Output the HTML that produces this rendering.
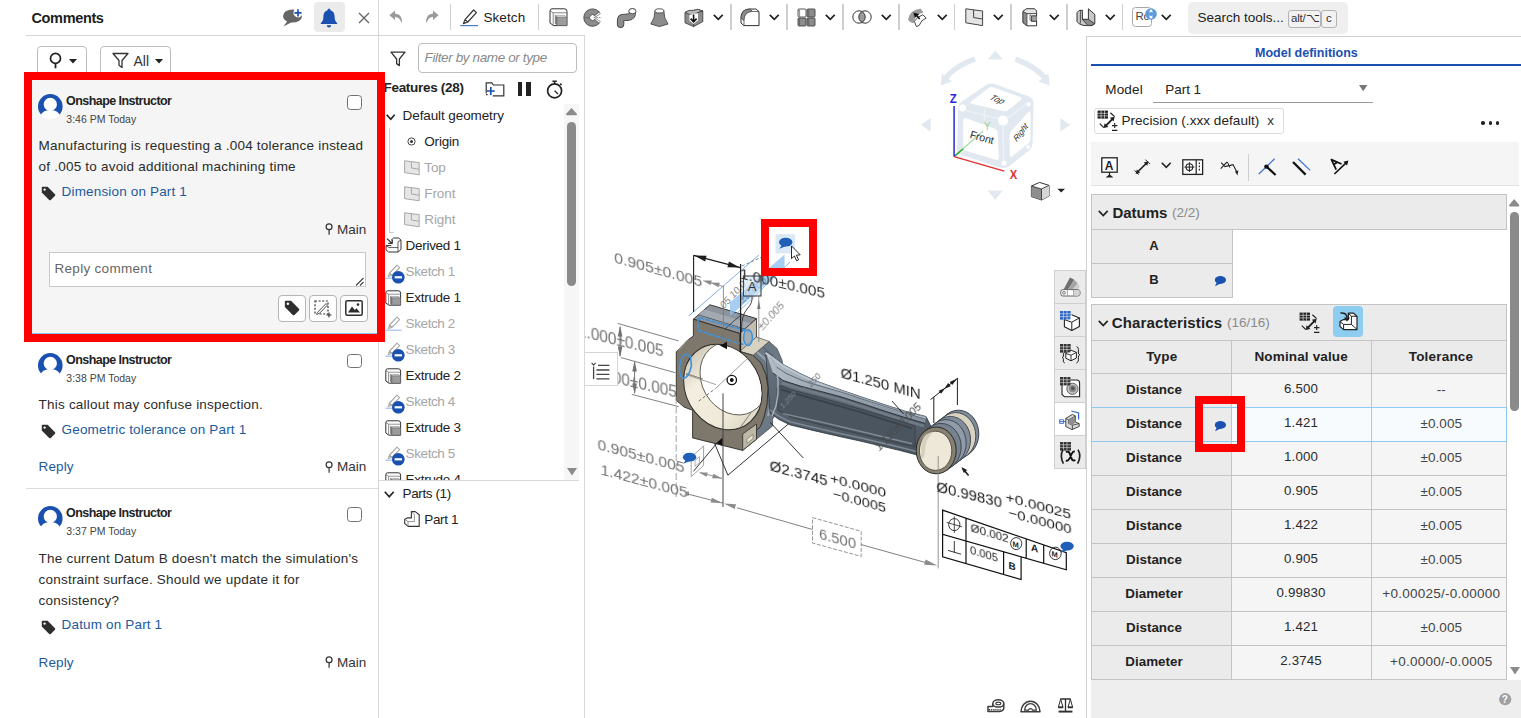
<!DOCTYPE html>
<html><head><meta charset="utf-8"><title>Comments</title>
<style>
*{box-sizing:border-box;margin:0;padding:0}
html,body{width:1521px;height:718px;overflow:hidden;background:#fff}
body{position:relative;font-family:"Liberation Sans",sans-serif;color:#222;font-size:14px}
.abs{position:absolute}
.t{position:absolute;white-space:nowrap;line-height:1}
svg{overflow:visible}
svg text{font-family:"Liberation Sans",sans-serif}
</style></head><body>
<!-- VIEWPORT -->
<div class="abs" style="left:1053.5px;top:269.5px;width:32.5px;height:34.0px;background:#ebebeb;border:1px solid #cfcfcf;"></div>
<div class="abs" style="left:1053.5px;top:302.5px;width:32.5px;height:34.5px;background:#ebebeb;border:1px solid #cfcfcf;"></div>
<div class="abs" style="left:1053.5px;top:336px;width:32.5px;height:33.5px;background:#ebebeb;border:1px solid #cfcfcf;"></div>
<div class="abs" style="left:1053.5px;top:368.5px;width:32.5px;height:34.0px;background:#ebebeb;border:1px solid #cfcfcf;"></div>
<div class="abs" style="left:1053.5px;top:401.5px;width:32.5px;height:34.0px;background:#fff;border:1px solid #cfcfcf;"></div>
<div class="abs" style="left:1053.5px;top:434.5px;width:32.5px;height:34.5px;background:#ebebeb;border:1px solid #cfcfcf;"></div>
<svg class="abs" style="left:1059.5px;top:277px;" width="21" height="20" viewBox="0 0 21 20"><path d="M3.6 12.6 L10 0.6 L14.2 2.8 L8 12.6Z" fill="#6e6e6e"/><path d="M8 12.6 L14.2 2.8 L17.8 6.2 L12.6 12.6Z" fill="#a4a4a4"/><path d="M12.6 12.6 L17.8 6.2 L19.8 9.4 L17.2 12.6Z" fill="#cdcdcd"/><rect x="0.8" y="12.6" width="19.2" height="6.4" rx="2.2" fill="#fff" stroke="#666" stroke-width="1"/><rect x="13.6" y="13.2" width="5.8" height="5.2" fill="#d4d4d4"/><path d="M7.4 12.8v6M13.6 12.8v6" stroke="#888" stroke-width="0.7"/><circle cx="4" cy="15.8" r="1.4" fill="none" stroke="#555" stroke-width="0.8"/></svg>
<svg class="abs" style="left:1059.5px;top:310.5px;" width="21" height="21" viewBox="0 0 21 21"><rect x="0" y="0" width="10.4" height="8.4" fill="#2f66c8"/><path d="M0 2.8h10.4M0 5.6h10.4M3.5 0v8.4M7 0v8.4" stroke="#e8e8e8" stroke-width="0.6"/><path d="M11.6 3.8 L19.4 7 L19.4 15.4 L11.8 19.4 L4.4 15.8 L4.4 8.6" fill="#fff" stroke="#222" stroke-width="1.1" stroke-linejoin="round"/><path d="M4.4 8.6 L11.8 11.2 L19.4 7 M11.8 11.2 V19.4" fill="none" stroke="#222" stroke-width="1"/><rect x="0" y="0" width="10.4" height="8.4" fill="#2f66c8"/><path d="M0 2.8h10.4M0 5.6h10.4M3.5 0v8.4M7 0v8.4" stroke="#e8e8e8" stroke-width="0.6"/></svg>
<svg class="abs" style="left:1059.5px;top:343.5px;" width="21" height="21" viewBox="0 0 21 21"><rect x="0" y="0" width="10.4" height="8.4" fill="#333"/><path d="M0 2.8h10.4M0 5.6h10.4M3.5 0v8.4M7 0v8.4" stroke="#e8e8e8" stroke-width="0.6"/><path d="M11 6.2 L16.4 8.4 L16.4 14 L11 16.8 L5.8 14.2 L5.8 8.6Z" fill="#fff" stroke="#222" stroke-width="1" stroke-linejoin="round"/><path d="M5.8 9.4 L11 11.2 L16.4 8.4 M11 11.2 V16.8" fill="none" stroke="#222" stroke-width="0.9"/><path d="M4.6 8.6 Q2.6 9 3.4 12 Q3.6 13.2 2.2 13.6 Q3.6 14 3.4 15.2 Q2.6 18.6 4.8 19" fill="none" stroke="#222" stroke-width="1"/><path d="M16.6 2.6 Q18.8 3 18.4 8 Q18.2 10.4 19.8 10.8 Q18.2 11.2 18.4 13.6 Q18.8 18.6 16.4 19" fill="none" stroke="#222" stroke-width="1"/><rect x="0" y="0" width="10.4" height="8.4" fill="#333"/><path d="M0 2.8h10.4M0 5.6h10.4M3.5 0v8.4M7 0v8.4" stroke="#e8e8e8" stroke-width="0.6"/></svg>
<svg class="abs" style="left:1059.5px;top:376.5px;" width="21" height="21" viewBox="0 0 21 21"><path d="M2 6 L2 17.4 L4.6 19.8 L19.6 19.8 L19.6 6 Q19.6 3 16.6 3 L8 3" fill="#fff" stroke="#222" stroke-width="1.1"/><circle cx="12.4" cy="11.8" r="5.6" fill="#c4c4c4" stroke="#444" stroke-width="0.8"/><circle cx="12.6" cy="11.6" r="3.6" fill="#8a8a8a"/><circle cx="12.8" cy="11.4" r="1.8" fill="#555"/><rect x="0" y="0" width="10.4" height="8.4" fill="#333"/><path d="M0 2.8h10.4M0 5.6h10.4M3.5 0v8.4M7 0v8.4" stroke="#e8e8e8" stroke-width="0.6"/></svg>
<svg class="abs" style="left:1059px;top:410px;" width="23" height="20" viewBox="0 0 23 20"><path d="M6.8 8.4 L13.4 4.4 L16.4 6 L16.4 12 L20.2 13.6 L20.2 16.4 L13 19.6 L6.8 16.6Z" fill="#d9d9d9" stroke="#333" stroke-width="0.9" stroke-linejoin="round"/><path d="M9.6 9.8 L16.4 6 M9.6 9.8 L9.6 13.4 L13.4 15.2 L20.2 13.6 M13.4 15.2 V19.4 M6.8 8.4 L9.6 9.8" fill="none" stroke="#333" stroke-width="0.8"/><path d="M9.6 9.8 L16.2 6.2 L16.4 12 L13.4 15.2 L9.6 13.4Z" fill="#8f8f8f"/><path d="M12.4 1 L19.6 3 L19.6 9.6" fill="none" stroke="#2f66c8" stroke-width="1.2"/><path d="M0.6 11.6 h6.4 M0.6 9.8 h4v3.6h-4z" fill="none" stroke="#2f66c8" stroke-width="0.9"/></svg>
<svg class="abs" style="left:1059.5px;top:441.5px;" width="22" height="23" viewBox="0 0 22 23"><rect x="0" y="0" width="11" height="8.6" fill="#333"/><path d="M0 2.8h11M0 5.6h11M3.5 0v8.6M7 0v8.6" stroke="#e8e8e8" stroke-width="0.6"/><path d="M3 7.6 Q-0.6 14 3.4 21.6" fill="none" stroke="#222" stroke-width="1.7"/><path d="M18 7.6 Q21.8 14 17.6 21.6" fill="none" stroke="#222" stroke-width="1.7"/><path d="M6 10.2 Q8.4 8.6 9.8 11.6 L11.6 16.6 Q12.6 19.6 15.4 18 M14.8 9.6 Q13 9 11.4 12.4 L9.6 16.4 Q8 19.4 5.8 18.6" fill="none" stroke="#111" stroke-width="1.9"/></svg>
<svg class="abs" style="left:986.5px;top:699px;" width="18" height="13.5" viewBox="0 0 18 13.5"><path d="M5.8 4.6 L5.8 7.6 L1 7.6 L1 12.4 L12.4 12.4 Q16.8 12 16.8 8.4 L16.8 4.6" fill="#fff" stroke="#3d3d3d" stroke-width="1.5" stroke-linejoin="round"/><path d="M2 10.8h12" stroke="#3d3d3d" stroke-width="1.6" stroke-dasharray="1.2 0.9"/><ellipse cx="11.3" cy="4.4" rx="5.5" ry="3.7" fill="#fff" stroke="#3d3d3d" stroke-width="1.5"/><ellipse cx="11.3" cy="4.4" rx="2.5" ry="1.3" fill="none" stroke="#3d3d3d" stroke-width="1.1"/></svg>
<svg class="abs" style="left:1020px;top:699px;" width="21" height="14" viewBox="0 0 21 14"><path d="M1 12.8 A9.5 10.6 0 0 1 20 12.8 Z" fill="#fff" stroke="#3d3d3d" stroke-width="1.5" stroke-linejoin="round"/><path d="M4.6 11.2 A5.9 6.6 0 0 1 16.4 11.2 L12.6 11.2 A2.2 2.2 0 0 0 8.4 11.2Z" fill="#fff" stroke="#3d3d3d" stroke-width="1.3" stroke-linejoin="round"/></svg>
<svg class="abs" style="left:1057.5px;top:698px;" width="15" height="15" viewBox="0 0 15 15"><path d="M2.2 1h10.6M7.5 1v12.4" stroke="#2e2e2e" stroke-width="1.3"/><path d="M0.6 13.6h13.8" stroke="#2e2e2e" stroke-width="1.9"/><path d="M2.6 1.2 L0.4 9.2 L5 9.2Z M12.4 1.2 L10 9.2 L14.6 9.2Z" fill="#fff" stroke="#2e2e2e" stroke-width="1" stroke-linejoin="round"/><path d="M0.2 9.4h5M9.8 9.4h5" stroke="#2e2e2e" stroke-width="1.6"/></svg>
<svg class="abs" style="left:0;top:0" width="1521" height="718" viewBox="0 0 1521 718"><path d="M995.2 50.5L987.7 59.5H1002.8Z M995.2 199.9L987.7 190.4H1002.8Z M920.6 124.8L930.6 118.2V131.5Z M1070.4 124.8L1060.4 118.2V131.5Z" fill="#e2e8f0"/><path d="M975 59 Q955 66 944.5 79" fill="none" stroke="#e2e8f0" stroke-width="5.5"/><path d="M940.6 85.5 L942 73.6 L952 81.4Z" fill="#e2e8f0"/><path d="M1015.4 59 Q1035.4 66 1045.9 79" fill="none" stroke="#e2e8f0" stroke-width="5.5"/><path d="M1049.8 85.5 L1048.4 73.6 L1038.4 81.4Z" fill="#e2e8f0"/><path d="M958.4 108 Q958.4 103.5 962 101.4 L986 85 Q990.6 82.4 995.5 84.2 L1029 96.5 Q1033.6 98.6 1033.6 103.5 L1032.6 143 Q1032.4 147.6 1029 150.6 L1009 166.2 Q1004.8 169.2 1000 167.4 L961.4 155 Q957 153.4 957 149Z" fill="#e2e8f0"/><path d="M971.5 101.2 L988.5 88 Q990.8 86.4 993.6 87.4 L1019.8 96.8 Q1023 98.2 1020.4 100.4 L1007.6 110.4 Q1005.6 111.8 1003 111 L972.4 104 Q969 103.2 971.5 101.2Z" fill="#fff"/><path d="M963.2 121 Q963.2 117 967 118.4 L994.4 128.6 Q997.6 130 997.7 133.4 L998.8 156.8 Q999 161 995 159.6 L966.6 151 Q963.2 150 963.2 146.4Z" fill="#fff"/><path d="M1009.6 135.6 Q1009.6 132.8 1011.4 130.8 L1027.4 113 Q1030.6 109.6 1030.6 114.4 L1030.4 139 Q1030.4 141.8 1028.2 143.6 L1012.6 156 Q1009.7 158.4 1009.7 154.6Z" fill="#fff"/><circle cx="962.6" cy="108" r="3.4" fill="#fff"/><circle cx="1003" cy="120.6" r="5" fill="#fff"/><circle cx="1028.6" cy="104.4" r="2.2" fill="#fff"/><circle cx="1004" cy="163" r="2.6" fill="#fff"/><circle cx="961.6" cy="150.6" r="2" fill="#fff"/><circle cx="1028" cy="147" r="2" fill="#fff"/><path d="M984.4 108.6 L984.4 120.2 M1003 125 L1003.6 160 M966 110.6 L998 118.6 M1007.6 118.6 L1026.4 103.6" stroke="#eef2f7" stroke-width="1.4" fill="none"/><path d="M954.1 156.6 L983 131.2" stroke="#9fdc9f" stroke-width="1.2"/><path d="M954.1 156.6 L963 148.8" stroke="#2fae3a" stroke-width="1.6"/><path d="M954.1 106 V156.6" stroke="#2626dc" stroke-width="1.5"/><path d="M954.1 156.6 L1004.3 171.1" stroke="#e23030" stroke-width="1.5"/><text x="953.2" y="102.8" font-size="13" font-weight="bold" fill="#2626dc" text-anchor="middle" textLength="7" lengthAdjust="spacingAndGlyphs">Z</text><text x="1013.6" y="179" font-size="13" font-weight="bold" fill="#e23030" text-anchor="middle" textLength="7.5" lengthAdjust="spacingAndGlyphs">X</text><text x="987.4" y="130.4" font-size="10" fill="#93d493" text-anchor="middle">Y</text><text transform="translate(995.3,101.6) rotate(21) skewX(-22)" font-size="8.6" fill="#333" text-anchor="middle" font-style="italic">Top</text><text transform="translate(980.8,141) rotate(16)" font-size="10.8" fill="#333" text-anchor="middle" letter-spacing="-0.2">Front</text><text transform="translate(1022.6,134.4) rotate(-53) skewX(-12)" font-size="8.4" fill="#333" text-anchor="middle" font-style="italic">Right</text><path d="M1031.4 186 L1039.6 182.4 L1049 185.4 L1049 196 L1041.6 200 L1031.4 196.6Z" fill="#fff" stroke="#333" stroke-width="1" stroke-linejoin="round"/><path d="M1031.4 186 L1041.4 189 L1041.6 200 L1031.4 196.6Z" fill="#8e8e8e"/><path d="M1041.4 189 L1049 185.4 L1049 196 L1041.6 200Z" fill="#d6d6d6"/><path d="M1031.4 186 L1041.4 189 L1049 185.4 M1041.4 189 L1041.6 200" fill="none" stroke="#333" stroke-width="0.9"/><path d="M1057.4 188.8h7.6l-3.8 3.8z" fill="#222"/></svg>
<svg class="abs" style="left:585px;top:36px;overflow:hidden" width="500" height="682" viewBox="585 36 500 682"><defs><linearGradient id="bore" x1="0" y1="0" x2="1" y2="1"><stop offset="0" stop-color="#b9b3a2"/><stop offset="0.35" stop-color="#f3eedf"/><stop offset="0.7" stop-color="#efe9d8"/><stop offset="1" stop-color="#cfc9b7"/></linearGradient><linearGradient id="rodg" x1="0" y1="0" x2="0" y2="1"><stop offset="0" stop-color="#6a7682"/><stop offset="1" stop-color="#49535d"/></linearGradient><filter id="bl"><feGaussianBlur stdDeviation="0.45"/></filter></defs><path d="M752.8 355.2 L769.1 341.4 L777.0 348.5 L782.0 360.0 L784.5 374.0 L783.5 390.0 L780.5 403.0 L777.0 412.0 L772.6 419.0 L772.6 426.0 L756.5 439.2 L756.5 430.4 L760.5 426.5 L764.0 417.0 L767.0 404.0 L768.0 388.0 L766.0 375.0 L761.0 363.0Z" fill="#6c7884" stroke="#3e464e" stroke-width="0.7" stroke-linejoin="round" /><path d="M757.0 352.0 L765.5 359.5 L770.5 371.0 L772.5 386.0 L771.5 402.0 L768.0 416.0" fill="none" stroke="#98a4b0" stroke-width="2.2" /><path d="M763.0 347.0 L772.0 355.0 L777.5 368.0 L779.5 384.0 L778.0 400.0 L774.0 413.0" fill="none" stroke="#525d68" stroke-width="1" /><path d="M765.6 351.5 L772.0 356.0 L783.4 364.6 L800.0 373.4 L816.9 381.3 L840.0 389.6 L861.4 396.9 L885.0 404.8 L906.0 411.4 L926.0 416.5 L938.0 440.0 L921.0 456.0 L900.0 450.5 L883.7 446.6 L860.0 441.0 L839.1 436.4 L815.0 430.9 L790.1 424.9 L779.0 419.5 L770.0 413.0Z" fill="url(#rodg)" stroke="#2f363d" stroke-width="0.8" stroke-linejoin="round" /><linearGradient id="flg" x1="0" y1="0" x2="1" y2="0"><stop offset="0" stop-color="#b3bdc7"/><stop offset="0.4" stop-color="#98a4b0"/><stop offset="1" stop-color="#8692a0"/></linearGradient><path d="M765.6 351.5 L772.0 356.0 L783.4 364.6 L800.0 373.4 L816.9 381.3 L840.0 389.6 L861.4 396.9 L885.0 404.8 L906.0 411.4 L926.0 416.5 L925.0 423.4 L906.0 417.9 L885.0 411.2 L861.4 403.4 L840.0 396.6 L816.9 390.4 L800.0 386.0 L783.0 380.5 L773.0 373.0Z" fill="url(#flg)"/><path d="M765.2 353.1 L771.6 357.6 L783.0 366.2 L799.6 375.0 L816.5 382.9 L839.6 391.2 L861.0 398.5 L884.6 406.4 L905.6 413.0 L925.6 418.1" fill="none" stroke="#c3ccd5" stroke-width="1.2" /><path d="M775.0 366.0 L786.0 373.4 L802.0 380.4 L818.0 385.4 L841.0 392.0 L862.0 399.0 L886.0 406.8 L907.0 413.5 L925.0 419.0" fill="none" stroke="#5e6a76" stroke-width="1" /><path d="M773.0 373.0 L783.0 380.5 L800.0 386.0 L816.9 390.4 L840.0 396.6 L861.4 403.4 L885.0 411.2 L906.0 417.9 L925.0 423.4" fill="none" stroke="#2c3238" stroke-width="1" /><path d="M782.0 383.1 L799.0 388.6 L815.9 393.0 L839.0 399.2 L860.4 406.0 L884.0 413.8 L905.0 420.5 L924.0 426.0" fill="none" stroke="#6f7b87" stroke-width="2.6" /><path d="M777.0 388.0 L781.0 385.6 L790.0 389.4 L820.0 397.4 L860.0 409.0 L900.0 421.0 L915.0 426.0 L915.0 447.0 L900.0 443.5 L860.0 434.0 L820.0 424.6 L792.0 417.5 L778.0 410.5Z" fill="#4b555f" stroke="#343b42" stroke-width="0.7" stroke-linejoin="round" /><path d="M781.0 389.6 L820.0 400.6 L860.0 412.0 L912.0 428.4" fill="none" stroke="#39414a" stroke-width="1.8" /><path d="M783.0 413.6 L820.0 421.8 L860.0 431.2 L912.0 443.8" fill="none" stroke="#7d8995" stroke-width="1.4" /><path d="M770.0 409.8 L779.0 416.3 L790.1 421.7 L815.0 427.7 L839.1 433.2 L860.0 437.8 L883.7 443.4 L900.0 447.3 L921.0 452.8" fill="none" stroke="#7c8894" stroke-width="1.6" /><path d="M771.0 357.0 L776.0 367.0 L778.0 380.0 L778.0 394.0 L776.0 406.0 L772.0 416.0" fill="none" stroke="#a7b2bd" stroke-width="1.4" /><path d="M693.4 319.2 L709.9 304.8 L756.5 318.6 L739.8 333.5Z" fill="#8d949b" stroke="#2b2b2b" stroke-width="0.9" stroke-linejoin="round" /><path d="M698.6 314.6 L745.0 328.8" fill="none" stroke="#30353a" stroke-width="0.9" /><path d="M698.6 314.6 L704.5 309.5 L751.0 323.4 L745.0 328.8Z" fill="#a2a9b0" /><path d="M725.0 328.9 L741.7 314.2" fill="none" stroke="#30353a" stroke-width="0.8" /><path d="M739.8 333.5 L756.5 318.6 L756.5 337.5 L739.8 352.6Z" fill="#c4beae" stroke="#2b2b2b" stroke-width="0.8" stroke-linejoin="round" /><path d="M739.8 351.2 L756.5 337.0 L769.1 341.4 L752.8 355.6Z" fill="#d8d2c0" stroke="#4a4a4a" stroke-width="0.7" stroke-linejoin="round" /><path d="M693.4 319.2 L739.8 333.5 L739.8 351.5 L752.8 355.2 L761.0 363.0 L766.0 375.0 L768.0 388.0 L767.0 404.0 L764.0 417.0 L760.5 426.5 L756.5 430.4 L756.5 439.2 L742.7 450.4 L692.6 437.9 L692.6 410.3 L684.0 407.0 L676.3 400.3 L676.3 351.8 L687.6 340.1 L693.4 336.0Z" fill="#7d776c" stroke="#2e2c28" stroke-width="0.9" stroke-linejoin="round" /><path d="M676.3 351.8 L687.6 340.1 L690.5 337.6 L680.0 349.0Z" fill="#b9b3a2" /><path d="M742.7 434.0 L756.5 424.0 L756.5 439.2 L742.7 450.4Z" fill="#bdb7a6" stroke="#2e2c28" stroke-width="0.8" stroke-linejoin="round" /><path d="M747.0 439.0 L753.0 434.4 L753.0 438.6 L747.0 443.4Z" fill="#e9e4d4" stroke="#555" stroke-width="0.5" stroke-linejoin="round" /><ellipse transform="matrix(1,0.17,0,1,722.8,387)" cx="0" cy="0" rx="39.2" ry="42.2" fill="url(#bore)" stroke="#2e2c28" stroke-width="1"/><clipPath id="bc"><ellipse transform="matrix(1,0.17,0,1,722.8,387)" cx="0" cy="0" rx="38.6" ry="41.6"/></clipPath><g clip-path="url(#bc)"><ellipse transform="matrix(1,0.17,0,1,733.5,378.5)" cx="0" cy="0" rx="33.5" ry="36" fill="#fff" stroke="#55514a" stroke-width="0.9"/><path d="M686.0 373.5 L703.0 379.0" fill="none" stroke="#6b675e" stroke-width="0.8" /><path d="M740.0 427.8 L751.0 412.6" fill="none" stroke="#6b675e" stroke-width="0.8" /></g><path d="M682 357.4 Q686.5 351.6 690.6 356.4 L691.4 366 Q688.6 378 683.4 378.4 Q679 376.4 679.4 367Z" fill="none" stroke="#3f93dd" stroke-width="1.6"/><path d="M699.4 317.6 L751 332 M699.4 317.6 Q696.6 322 698.8 330.8 L743.5 344.6" fill="none" stroke="#3f93dd" stroke-width="1.6" stroke-dasharray="5 1.2"/><ellipse cx="748" cy="337.4" rx="4.4" ry="8" fill="#8fa6bd" fill-opacity="0.6" stroke="#3f93dd" stroke-width="1.5"/><circle cx="731.8" cy="380" r="4.7" fill="#fff" stroke="#111" stroke-width="1.3"/><circle cx="731.8" cy="380" r="1.9" fill="#111"/><path d="M698.7 401.1 L715.4 388.6" fill="none" stroke="#555" stroke-width="0.8" stroke-dasharray="3 2"/><path d="M715.4 388.6 L748.0 358.0" fill="none" stroke="#777" stroke-width="0.7" /><path d="M686.0 374.5 L716.0 384.6" fill="none" stroke="#777" stroke-width="0.7" /><path d="M719.8 345.4L727 341.8V349.2Z" fill="#111"/><path d="M716.5 443L722.6 437.6V446Z" fill="#111"/><ellipse cx="958.4" cy="433.8" rx="20.4" ry="23.6" fill="#808c99" stroke="#2f363d" stroke-width="0.9"/><path d="M925.4 430.7 L947.6 414.1 L969.2 453.5 L947.0 470.1Z" fill="#808c99" stroke="#2f363d" stroke-width="0.9" stroke-linejoin="round" /><ellipse cx="955.6" cy="436" rx="20.2" ry="23.4" fill="#d9d3c2" stroke="#2f363d" stroke-width="0.8"/><ellipse cx="950.4" cy="439.8" rx="20.2" ry="23.4" fill="#808c99" stroke="#2f363d" stroke-width="0.8"/><ellipse cx="946" cy="443" rx="20.2" ry="23.4" fill="#8f9ba8" stroke="#2f363d" stroke-width="0.8"/><ellipse cx="941" cy="446.8" rx="20.2" ry="23.4" fill="#76828f" stroke="#2f363d" stroke-width="0.8"/><ellipse cx="936.2" cy="450.4" rx="20" ry="23.4" fill="#878171" stroke="#2a2825" stroke-width="1"/><ellipse cx="935.6" cy="450.8" rx="16.2" ry="19.6" fill="#eee8d8" stroke="#4a463e" stroke-width="0.9"/><path d="M921.6 441 Q924 432.6 934 431.6 Q925 438 924.6 455 Q922 462 921 455Z" fill="#cfc9b8" opacity="0.8"/><path d="M730 302.5 L784.5 254.5 L784.5 268 L730 316Z" fill="#8ec0ec" fill-opacity="0.78"/><path d="M688.6 316.1 L758.8 255.1" fill="none" stroke="#7fb2e5" stroke-width="1" /><path d="M734.0 316.0 L790.0 262.0" fill="none" stroke="#7fb2e5" stroke-width="0.9" /><text transform="translate(742,304) rotate(-42) skewX(-20)" font-size="11" fill="#6b8cad" font-style="italic">±0.005</text><text transform="translate(724,309) rotate(-47)" font-size="10" fill="#8a8a8a" font-style="italic">05 10.0</text><rect x="775.5" y="234.2" width="19.7" height="19.2" fill="#dbe8f5"/><path d="M693.6 255.2 L693.6 312.0" fill="none" stroke="#1e1e1e" stroke-width="1.1" /><path d="M693.6 255.4 L740.4 267.6" fill="none" stroke="#1e1e1e" stroke-width="1.1" /><path d="M694.2 255.6L706.6 255.7L705.1 261.5Z" fill="#1e1e1e"/><path d="M739.8 267.4L727.4 267.3L728.9 261.5Z" fill="#1e1e1e"/><path d="M740.6 264.0 L740.6 352.0" fill="none" stroke="#1e1e1e" stroke-width="1.2" /><path d="M742.0 266.0 L764.0 256.0" fill="none" stroke="#666" stroke-width="0.8" stroke-dasharray="3 2"/><rect x="743.4" y="276" width="17.6" height="20" fill="#cfe3f5" fill-opacity="0.6" stroke="#333" stroke-width="1"/><text x="752.2" y="291.4" font-size="13" fill="#333" text-anchor="middle">A</text><path d="M752 296 Q753 303 747 309 Q741 316 741.6 331" fill="none" stroke="#333" stroke-width="0.9"/><path d="M758.8 295.0 L758.8 342.0" fill="none" stroke="#777" stroke-width="0.7" /><path d="M758.8 300.0L760.5 309.0L757.1 309.0Z" fill="#777"/><text transform="matrix(1,0.28,0,1,614.2,262.4)" font-size="14" fill="#727272" textLength="88" lengthAdjust="spacingAndGlyphs" filter="url(#bl)">0.905±0.005</text><path d="M702.5 280.4L711.8 280.6L710.5 285.0Z" fill="#8c8c8c"/><path d="M710.5 282.6L719.8 282.8L718.5 287.2Z" fill="#8c8c8c"/><path d="M711.0 283.0 L724.0 286.6" fill="none" stroke="#8c8c8c" stroke-width="0.9" /><path d="M723.4 286.0 L723.4 344.0" fill="none" stroke="#777" stroke-width="0.8" /><text transform="matrix(1,0.235,0,1,740,278.4)" font-size="15" fill="#333" textLength="85" lengthAdjust="spacingAndGlyphs" filter="url(#bl)">1.000±0.005</text><text transform="translate(762.5,331) rotate(-48)" font-size="11" fill="#8a8a8a" font-style="italic" filter="url(#bl)">±0.005</text><text transform="matrix(1,0.245,0,1,578,335.8)" font-size="16" fill="#727272" textLength="85.5" lengthAdjust="spacingAndGlyphs" filter="url(#bl)">1.000±0.005</text><text transform="matrix(1,0.236,0,1,591.4,377.5)" font-size="16" fill="#727272" textLength="85.5" lengthAdjust="spacingAndGlyphs" filter="url(#bl)">1.000±0.005</text><path d="M617.6 323.4 L678.6 340.9" fill="none" stroke="#727272" stroke-width="0.9" /><path d="M621.0 357.6 L675.3 372.7" fill="none" stroke="#727272" stroke-width="0.9" /><path d="M631.8 394.4 L678.6 406.6" fill="none" stroke="#727272" stroke-width="0.9" /><path d="M620.1 327.0 L620.1 356.0" fill="none" stroke="#727272" stroke-width="1" /><path d="M620.1 325.6L622.4 336.6L617.8 336.6Z" fill="#727272"/><path d="M620.1 357.4L617.8 346.4L622.4 346.4Z" fill="#727272"/><path d="M634.6 362.0 L634.6 393.0" fill="none" stroke="#727272" stroke-width="1" /><path d="M634.6 360.6L636.9 371.6L632.3 371.6Z" fill="#727272"/><path d="M634.6 394.6L632.3 383.6L636.9 383.6Z" fill="#727272"/><path d="M676.2 397.0 L676.2 497.0" fill="none" stroke="#8a8a8a" stroke-width="0.8" stroke-dasharray="7 2.5"/><path d="M723.0 393.4 L723.0 507.0" fill="none" stroke="#444" stroke-width="1" /><text transform="matrix(1,0.27,0,1,597.6,449.3)" font-size="15.5" fill="#727272" textLength="87" lengthAdjust="spacingAndGlyphs" filter="url(#bl)">0.905±0.005</text><text transform="matrix(1,0.27,0,1,600.6,474.4)" font-size="15.5" fill="#727272" textLength="87" lengthAdjust="spacingAndGlyphs" filter="url(#bl)">1.422±0.005</text><path d="M699.0 472.4L707.8 472.4L706.6 476.8Z" fill="#8c8c8c"/><path d="M722.4 478.6L712.1 478.2L713.3 473.8Z" fill="#8c8c8c"/><path d="M700.0 472.6 L722.0 478.4" fill="none" stroke="#8c8c8c" stroke-width="0.9" /><path d="M686.9 493.8 L722.6 503.0" fill="none" stroke="#727272" stroke-width="0.9" /><path d="M722.8 503.2L710.6 502.5L711.9 497.7Z" fill="#8c8c8c"/><path d="M723.4 503.4L723.5 503.4L723.5 503.5Z" fill="#8c8c8c"/><path d="M723.8 503.6L736.0 504.3L734.7 509.1Z" fill="#8c8c8c"/><rect x="686" y="491.6" width="3" height="4" fill="#888"/><path d="M691.2 457 L703.6 446 L703.6 465.6 L691.2 476.6Z" fill="#fff" stroke="#8a8a8a" stroke-width="0.8"/><path d="M695 460.6 L699.4 456.6 L699.4 462.4 L695 466.4Z" fill="none" stroke="#8a8a8a" stroke-width="0.7"/><path d="M693.5 471.3 L717.3 442.6" fill="none" stroke="#1e1e1e" stroke-width="0.9" /><path d="M714.6 443.5 L727.9 475.2 L788.7 423.7" fill="none" stroke="#1e1e1e" stroke-width="0.9" /><path d="M770.2 422.3 L803.3 458.0" fill="none" stroke="#1e1e1e" stroke-width="0.9" /><path d="M737.0 507.8 L812.5 529.5" fill="none" stroke="#727272" stroke-width="0.9" /><path d="M812.5 517.6 L861.2 531.3 L861.2 556.4 L812.5 543Z" fill="#fff" stroke="#8a8a8a" stroke-width="0.9" stroke-dasharray="4 1.6"/><text transform="matrix(1,0.28,0,1,819,538.6)" font-size="14.5" fill="#727272" textLength="37" lengthAdjust="spacingAndGlyphs" filter="url(#bl)">6.500</text><path d="M861.2 544.6 L925.0 562.4" fill="none" stroke="#727272" stroke-width="0.9" /><path d="M937.4 565.6L924.1 564.8L925.6 559.6Z" fill="#8c8c8c"/><path d="M938.2 456.0 L938.2 568.4" fill="none" stroke="#8a8a8a" stroke-width="0.9" /><text transform="matrix(1,0.27,0,1,840.6,377.6)" font-size="14.5" fill="#1e1e1e" textLength="80" lengthAdjust="spacingAndGlyphs" filter="url(#bl)">Ø1.250 MIN</text><path d="M892.0 401.0 L903.5 414.0" fill="none" stroke="#1e1e1e" stroke-width="0.9" /><path d="M933.8 397.0 L933.8 423.0" fill="none" stroke="#1e1e1e" stroke-width="1" /><path d="M957.4 378.0 L957.4 405.0" fill="none" stroke="#1e1e1e" stroke-width="1" /><path d="M930.5 399.6 L957.4 378.4" fill="none" stroke="#1e1e1e" stroke-width="1" /><path d="M957.2 378.6L952.2 385.1L949.7 382.0Z" fill="#1e1e1e"/><path d="M945.4 387.9L941.1 393.8L938.7 390.7Z" fill="#1e1e1e"/><path d="M944.0 389.0L948.3 383.1L950.7 386.2Z" fill="#1e1e1e"/><text transform="translate(879.5,451.5) rotate(-46)" font-size="11" fill="#4a4a4a" font-style="italic" filter="url(#bl)">1.130±0.005</text><text transform="translate(783,409) rotate(-47)" font-size="8" fill="#7d8894" font-style="italic" filter="url(#bl)">1.250</text><text transform="translate(806,393) rotate(-47)" font-size="9" fill="#6b7682" font-style="italic" filter="url(#bl)">1.250</text><path d="M968.6 475.6 L963.0 469.0" fill="none" stroke="#1e1e1e" stroke-width="1.6" /><path d="M961.4 467.0L967.1 470.0L963.8 472.9Z" fill="#1e1e1e"/><text transform="matrix(1,0.27,0,1,769.6,470.4)" font-size="14.5" fill="#1e1e1e" textLength="58" lengthAdjust="spacingAndGlyphs" filter="url(#bl)">Ø2.3745</text><text transform="matrix(1,0.27,0,1,830,482.4)" font-size="13.5" fill="#1e1e1e" textLength="56" lengthAdjust="spacingAndGlyphs" filter="url(#bl)">+0.0000</text><text transform="matrix(1,0.27,0,1,833,498.2)" font-size="13.5" fill="#1e1e1e" textLength="53" lengthAdjust="spacingAndGlyphs" filter="url(#bl)">−0.0005</text><text transform="matrix(1,0.245,0,1,936.4,491.6)" font-size="14.5" fill="#1e1e1e" textLength="65.5" lengthAdjust="spacingAndGlyphs" filter="url(#bl)">Ø0.99830</text><text transform="matrix(1,0.27,0,1,1005.6,501.4)" font-size="13.5" fill="#1e1e1e" textLength="65.5" lengthAdjust="spacingAndGlyphs" filter="url(#bl)">+0.00025</text><text transform="matrix(1,0.27,0,1,1008.6,517)" font-size="13.5" fill="#1e1e1e" textLength="63" lengthAdjust="spacingAndGlyphs" filter="url(#bl)">−0.00000</text><path d="M942.6 510.1 L1066.3 552.8 L1066.3 569.8 L942.6 534.4Z M942.6 534.4 L942.6 556.9 L1021.1 579.5 L1021.1 556.9 M966 517.9 V563.6 M1026.2 539 V558.2 M1043.7 545 V563.2 M1003.6 551.9 V574.5" stroke="#111" stroke-width="1.2" fill="none" fill="#fff"/><ellipse cx="954.3" cy="524.6" rx="5.6" ry="6" fill="none" stroke="#222" stroke-width="0.9"/><path d="M946.6 522.4 L962.0 526.8" fill="none" stroke="#1e1e1e" stroke-width="0.8" /><path d="M954.3 516.4 L954.3 533.0" fill="none" stroke="#1e1e1e" stroke-width="0.8" /><path d="M954.3 541.0 L954.3 552.4" fill="none" stroke="#1e1e1e" stroke-width="0.9" /><path d="M948.0 550.4 L961.0 554.2" fill="none" stroke="#1e1e1e" stroke-width="0.9" /><text transform="matrix(1,0.3,0,1,970.6,531.4)" font-size="11" fill="#1e1e1e" textLength="38" lengthAdjust="spacingAndGlyphs" filter="url(#bl)">Ø0.002</text><ellipse cx="1016.2" cy="543.6" rx="5.6" ry="6" fill="none" stroke="#222" stroke-width="0.9"/><text transform="matrix(1,0.3,0,1,1012.6,546.2)" font-size="7.5" fill="#1e1e1e" font-weight="bold">M</text><text transform="matrix(1,0.3,0,1,1031,550.6)" font-size="10" fill="#1e1e1e" font-weight="bold">A</text><ellipse cx="1055.4" cy="553.4" rx="5.8" ry="6.2" fill="none" stroke="#222" stroke-width="0.9"/><text transform="matrix(1,0.3,0,1,1051.6,556)" font-size="7.5" fill="#1e1e1e" font-weight="bold">M</text><text transform="matrix(1,0.3,0,1,970,553.6)" font-size="11" fill="#1e1e1e" textLength="28" lengthAdjust="spacingAndGlyphs" filter="url(#bl)">0.005</text><text transform="matrix(1,0.3,0,1,1008.6,568.6)" font-size="10" fill="#1e1e1e" font-weight="bold">B</text><ellipse cx="785.7" cy="242.2" rx="6.7" ry="4.4" fill="#1f5fb8"/><path d="M782.2 244.7 L779.3000000000001 248.79999999999998 L786.3000000000001 246.0Z" fill="#1f5fb8"/><ellipse cx="689.6" cy="457.2" rx="6.7" ry="4.4" fill="#1f5fb8"/><path d="M686.1 459.7 L683.2 463.8 L690.2 461.0Z" fill="#1f5fb8"/><ellipse cx="1067.1" cy="546.1" rx="6.7" ry="4.4" fill="#1f5fb8"/><path d="M1063.6 548.6 L1060.6999999999998 552.7 L1067.6999999999998 549.9Z" fill="#1f5fb8"/><path d="M791.5 245.9 L791.5 258.6 L794.4 256 L796.6 260.8 L798.6 259.8 L796.4 255.2 L800.2 254.8Z" fill="#fff" stroke="#111" stroke-width="0.9" stroke-linejoin="round"/></svg>
<div class="abs" style="left:584px;top:352px;width:33.5px;height:33.5px;background:#fff;border:1px solid #d4d4d4;"></div>
<svg class="abs" style="left:591px;top:362px;" width="19" height="18" viewBox="0 0 19 18"><path d="M0.6 0.8 L2.6 3.2 L4.6 0.8" fill="none" stroke="#444" stroke-width="1.1"/><path d="M2.6 4.6v12.4" stroke="#444" stroke-width="1.3"/><path d="M7 3.4h11.4M5.4 8h13M5.4 12.4h13M5.4 16.8h13" stroke="#444" stroke-width="1.3"/></svg>

<!-- TOOLBAR -->
<svg class="abs" style="left:389px;top:9.5px;" width="14" height="14.5" viewBox="0 0 14 14.5"><path d="M6 0.4 L0.4 5.2 L6 10 L6 7 Q11 6.6 12.4 13.6 Q14.6 4.2 6 3.4Z" fill="#9a9a9a"/></svg>
<svg class="abs" style="left:424.5px;top:9.5px;" width="14" height="14.5" viewBox="0 0 14 14.5"><path d="M8 0.4 L13.6 5.2 L8 10 L8 7 Q3 6.6 1.6 13.6 Q-0.6 4.2 8 3.4Z" fill="#9a9a9a"/></svg>
<div class="abs" style="left:449.5px;top:4px;width:1.5px;height:26px;background:#cfcfcf;"></div>
<svg class="abs" style="left:460px;top:8.5px;" width="19" height="18" viewBox="0 0 19 18"><path d="M3.4 14.6 L5 10.6 L13.6 1 L16.4 3.6 L7.8 13 Z M5 10.6 L7.8 13" fill="#fff" stroke="#333" stroke-width="1.2" stroke-linejoin="round"/><path d="M0.4 16.6h17.6" stroke="#4a7bd0" stroke-width="1.2"/></svg>
<div class="t" style="top:10.6px;font-size:13.5px;left:483.4px;color:#222;letter-spacing:0.1px;">Sketch</div>
<div class="abs" style="left:537.5px;top:4px;width:1.5px;height:26px;background:#cfcfcf;"></div>
<svg class="abs" style="left:548.5px;top:8px;" width="19" height="18.5" viewBox="0 0 19 18.5"><path d="M3 0.8 H15.4 Q18 0.8 18 3.4 V17.6 H4.6 L1 15 V3 Q1 0.8 3 0.8Z" fill="#fff" stroke="#333" stroke-width="1"/><path d="M1.1 2.8 L4.2 4.8 V17.4 M4.2 4.8 H17.8" fill="none" stroke="#666" stroke-width="0.8"/><path d="M6.2 7.4 H15.8 L17.8 9.4 H8.2Z" fill="#cdcdcd" stroke="#666" stroke-width="0.4"/><path d="M6.2 7.4 L8.2 9.4 V17.4 L6.2 15.6Z" fill="#7a7a7a" stroke="#666" stroke-width="0.4"/><rect x="8.2" y="9.4" width="9.6" height="8" fill="#9c9c9c" stroke="#666" stroke-width="0.4"/></svg>
<svg class="abs" style="left:582.5px;top:8px;" width="19" height="19" viewBox="0 0 19 19"><path d="M16.16 4 A8.7 8.7 0 1 0 16.16 15.2 L11.8 11.53 A3 3 0 1 1 11.8 7.67Z" fill="#8c8c8c" stroke="#444" stroke-width="0.9" stroke-linejoin="round"/><path d="M16.2 4 L17.3 5.7 L12.7 8.9 L11.8 7.67Z M16.2 15.2 L17.3 13.5 L12.7 10.3 L11.8 11.53Z" fill="#fff" stroke="#444" stroke-width="0.6" stroke-linejoin="round"/><path d="M1.2 9.6 H6.4" stroke="#555" stroke-width="0.6"/><path d="M10.6 9.6 H18.6" stroke="#666" stroke-width="0.8" stroke-dasharray="1.6 1"/></svg>
<svg class="abs" style="left:616px;top:7.5px;" width="21" height="20" viewBox="0 0 21 20"><path d="M4.6 16.2 V13 C4.6 8.2 8 9.6 11 9.3 C15.4 9 16.4 8 16.4 4" fill="none" stroke="#444" stroke-width="7.4" stroke-linecap="round"/><path d="M4.6 16.2 V13 C4.6 8.2 8 9.6 11 9.3 C15.4 9 16.4 8 16.4 4" fill="none" stroke="#8c8c8c" stroke-width="5.6" stroke-linecap="round"/><ellipse cx="16.4" cy="3.2" rx="3.6" ry="2.6" fill="#fff" stroke="#444" stroke-width="0.9"/></svg>
<svg class="abs" style="left:650px;top:7.5px;" width="19" height="19" viewBox="0 0 19 19"><path d="M5 2.8 Q5.2 10 0.8 16 L9.4 18.6 L18 16 Q13.6 10 13.8 2.8Z" fill="#8c8c8c" stroke="#444" stroke-width="0.9" stroke-linejoin="round"/><ellipse cx="9.4" cy="2.9" rx="4.5" ry="2.1" fill="#fff" stroke="#444" stroke-width="0.9"/></svg>
<svg class="abs" style="left:684px;top:7.5px;" width="20" height="19" viewBox="0 0 20 19"><path d="M1 4.4 Q5 1.6 9.4 2.4 Q13.4 0 18.8 3 L18.8 13.6 L9.6 18.6 L1 14.8Z" fill="#8c8c8c" stroke="#444" stroke-width="0.9"/><path d="M1 4.4 Q5 6.4 9.6 7.4 Q14 3.4 18.8 3 M9.6 7.4V18.6" fill="none" stroke="#444" stroke-width="0.9"/><path d="M1 4.4 Q5 1.6 9.4 2.4 Q13.4 0 18.8 3 Q14 3.4 9.6 7.4 Q5 6.4 1 4.4Z" fill="#b8b8b8" stroke="#444" stroke-width="0.8"/><path d="M5.4 6.8 L14 5.2 L14 12.2 L9.6 16 L5.4 12.4Z" fill="#fff"/><path d="M9.6 6.4v7M6.6 10.6l3 3.2 3-3.2" fill="none" stroke="#111" stroke-width="1.6"/></svg>
<svg class="abs" style="left:713px;top:13.6px;" width="10.5" height="6.5" viewBox="0 0 10.5 6.5"><path d="M0.8 0.8L5.25 5.4L9.7 0.8" fill="none" stroke="#222" stroke-width="1.7"/></svg>
<div class="abs" style="left:730.0px;top:4px;width:1.5px;height:26px;background:#cfcfcf;"></div>
<svg class="abs" style="left:740px;top:8px;" width="20" height="18.5" viewBox="0 0 20 18.5"><path d="M1 10 Q1 1 10 1 L16 1 L19 3.6 L19 17.6 L4 17.6 L1 15Z" fill="#fff" stroke="#333" stroke-width="1"/><path d="M1 10 Q1 1 10 1 L12.6 3.4 Q4 3.6 4 12.6 Z" fill="#8c8c8c" stroke="#444" stroke-width="0.8"/><path d="M4 12.6 L4 17.6 M12.6 3.4 L19 3.6" stroke="#444" stroke-width="0.8" fill="none"/></svg>
<svg class="abs" style="left:769px;top:13.6px;" width="10.5" height="6.5" viewBox="0 0 10.5 6.5"><path d="M0.8 0.8L5.25 5.4L9.7 0.8" fill="none" stroke="#222" stroke-width="1.7"/></svg>
<div class="abs" style="left:786.0px;top:4px;width:1.5px;height:26px;background:#cfcfcf;"></div>
<svg class="abs" style="left:797px;top:8px;" width="19" height="18.5" viewBox="0 0 19 18.5"><rect x="1" y="1" width="8" height="8" rx="1" fill="#fff" stroke="#444" stroke-width="0.9"/><rect x="10" y="1" width="8" height="8" rx="1" fill="#8c8c8c" stroke="#444" stroke-width="0.9"/><rect x="1" y="10" width="8" height="8" rx="1" fill="#8c8c8c" stroke="#444" stroke-width="0.9"/><rect x="10" y="10" width="8" height="8" rx="1" fill="#8c8c8c" stroke="#444" stroke-width="0.9"/><path d="M1 2.4h1.6v6M10 2.4h1.6v6M1 11.4h1.6v6M10 11.4h1.6v6" fill="none" stroke="#555" stroke-width="0.7"/></svg>
<svg class="abs" style="left:825px;top:13.6px;" width="10.5" height="6.5" viewBox="0 0 10.5 6.5"><path d="M0.8 0.8L5.25 5.4L9.7 0.8" fill="none" stroke="#222" stroke-width="1.7"/></svg>
<div class="abs" style="left:842.0px;top:4px;width:1.5px;height:26px;background:#cfcfcf;"></div>
<svg class="abs" style="left:852px;top:10px;" width="20" height="14" viewBox="0 0 20 14"><defs><clipPath id="bl1"><circle cx="7" cy="7" r="6.2"/></clipPath></defs><circle cx="7" cy="7" r="6.2" fill="#fff"/><circle cx="13" cy="7" r="6.2" fill="#fff"/><circle cx="13" cy="7" r="6.2" fill="#9a9a9a" clip-path="url(#bl1)"/><circle cx="7" cy="7" r="6.2" fill="none" stroke="#333" stroke-width="1"/><circle cx="13" cy="7" r="6.2" fill="none" stroke="#333" stroke-width="1"/></svg>
<svg class="abs" style="left:881px;top:13.6px;" width="10.5" height="6.5" viewBox="0 0 10.5 6.5"><path d="M0.8 0.8L5.25 5.4L9.7 0.8" fill="none" stroke="#222" stroke-width="1.7"/></svg>
<div class="abs" style="left:898.0px;top:4px;width:1.5px;height:26px;background:#cfcfcf;"></div>
<svg class="abs" style="left:907px;top:7.5px;" width="21" height="20" viewBox="0 0 21 20"><path d="M1 11.6 Q3 1.6 13.6 0.8 L16.4 4.6 Q8 6 6.8 15 Q3 15 1 11.6Z" fill="#9a9a9a"/><path d="M7.4 13.4 Q9.6 8.8 15.8 6.8 L19.2 10 Q14 12 12.2 17.4 L9.4 18.6Z" fill="#fff" stroke="#333" stroke-width="0.9"/><path d="M6.4 4.4 L12.4 6.2 L10.6 7.4 L13.4 10.6 L12 11.6 L9.4 8.4 L7.8 9.8Z" fill="#111"/></svg>
<svg class="abs" style="left:936.5px;top:13.6px;" width="10.5" height="6.5" viewBox="0 0 10.5 6.5"><path d="M0.8 0.8L5.25 5.4L9.7 0.8" fill="none" stroke="#222" stroke-width="1.7"/></svg>
<div class="abs" style="left:953.5px;top:4px;width:1.5px;height:26px;background:#cfcfcf;"></div>
<svg class="abs" style="left:965px;top:8px;" width="19" height="18.5" viewBox="0 0 19 18.5"><path d="M0.8 0.8 L17.6 3 L17.6 17.6 L0.8 14.8Z" fill="#e4e4e4" stroke="#444" stroke-width="1"/><path d="M8.6 1.8 L8.6 9.6 L17.4 11" fill="none" stroke="#444" stroke-width="1"/></svg>
<svg class="abs" style="left:992.5px;top:13.6px;" width="10.5" height="6.5" viewBox="0 0 10.5 6.5"><path d="M0.8 0.8L5.25 5.4L9.7 0.8" fill="none" stroke="#222" stroke-width="1.7"/></svg>
<div class="abs" style="left:1010.0px;top:4px;width:1.5px;height:26px;background:#cfcfcf;"></div>
<svg class="abs" style="left:1022px;top:8px;" width="16" height="18.5" viewBox="0 0 16 18.5"><path d="M1 3.4 L4.4 0.8 L12.6 0.8 L14.6 3 L14.6 8 L9.6 8 L9.6 13.2 L14.6 13.2 L14.6 17.8 L5 17.8 L1 14.6Z" fill="#fff" stroke="#333" stroke-width="1" stroke-linejoin="round"/><path d="M1 3.4 L5 5.6 L5 17.8 L1 14.6Z" fill="#8c8c8c" stroke="#333" stroke-width="0.7"/><path d="M5 5.6 L14.4 5.6 M9.6 8 L8 6.8 M9.6 13.2 L8 12 L8 6.8" fill="none" stroke="#333" stroke-width="0.7"/><path d="M9.6 8 H14.6 V13.2 H9.6Z" fill="#a0a0a0" stroke="#333" stroke-width="0.6"/><path d="M1 3.4 L4.4 0.8 L12.6 0.8 L14.6 3 L14.4 5.6 L5 5.6Z" fill="#e4e4e4" stroke="#333" stroke-width="0.7"/></svg>
<svg class="abs" style="left:1049px;top:13.6px;" width="10.5" height="6.5" viewBox="0 0 10.5 6.5"><path d="M0.8 0.8L5.25 5.4L9.7 0.8" fill="none" stroke="#222" stroke-width="1.7"/></svg>
<div class="abs" style="left:1066.0px;top:4px;width:1.5px;height:26px;background:#cfcfcf;"></div>
<svg class="abs" style="left:1075.5px;top:8px;" width="20" height="18.5" viewBox="0 0 20 18.5"><path d="M1 4.6 Q2.4 1.6 6.4 2.2 L6.4 11.4 L12.4 11.4 L12.4 0.8 L18.8 6.4 L18.8 15.6 Q17 18.6 11.4 17.6 Q3.6 17.8 1 13.6Z" fill="#c9c9c9" stroke="#333" stroke-width="1" stroke-linejoin="round"/><path d="M6.4 11.4 L12 17.4 M12.4 11.4 L18.6 15.8 M4.4 2.4 V15.6" fill="none" stroke="#333" stroke-width="0.8"/><path d="M6.4 11.4 L12.4 11.4 L18.6 15.8 Q16 18 12 17.4Z" fill="#8c8c8c" stroke="#333" stroke-width="0.7"/></svg>
<svg class="abs" style="left:1105px;top:13.6px;" width="10.5" height="6.5" viewBox="0 0 10.5 6.5"><path d="M0.8 0.8L5.25 5.4L9.7 0.8" fill="none" stroke="#222" stroke-width="1.7"/></svg>
<div class="abs" style="left:1121.8px;top:4px;width:1.5px;height:26px;background:#cfcfcf;"></div>
<div class="abs" style="left:1131.5px;top:7px;width:20.5px;height:20px;border:1px solid #a8a8a8;border-radius:3.5px;background:#fff;"></div>
<div class="t" style="top:10.7px;font-size:11.5px;left:1135.4px;color:#444;letter-spacing:-0.3px;">Rc</div>
<svg class="abs" style="left:1145px;top:8px;" width="12" height="12" viewBox="0 0 12 12"><circle cx="6" cy="6" r="5.8" fill="#5c9bdc"/><rect x="4.6" y="1.4" width="2.8" height="9.2" rx="1.3" fill="#fff"/><circle cx="6" cy="6" r="2" fill="#5c9bdc"/></svg>
<svg class="abs" style="left:1161px;top:13.6px;" width="10.5" height="6.5" viewBox="0 0 10.5 6.5"><path d="M0.8 0.8L5.25 5.4L9.7 0.8" fill="none" stroke="#222" stroke-width="1.7"/></svg>
<div class="abs" style="left:1188px;top:1.5px;width:159.5px;height:32px;background:#efefef;border-radius:5px;"></div>
<div class="t" style="top:10.6px;font-size:13.5px;left:1197.5px;color:#222;letter-spacing:0px;">Search tools...</div>
<div class="abs" style="left:1287.5px;top:10px;width:33px;height:17.6px;background:#f2f2f2;border:1px solid #b3b3b3;border-bottom-width:1.5px;border-radius:3px;"></div>
<div class="t" style="top:13.3px;font-size:11.5px;left:1291.0px;color:#333;letter-spacing:-0.2px;">alt/⌥</div>
<div class="abs" style="left:1320.6px;top:10px;width:16.6px;height:17.6px;background:#f2f2f2;border:1px solid #b3b3b3;border-bottom-width:1.5px;border-radius:3px;"></div>
<div class="t" style="top:13.3px;font-size:11.5px;left:1326.0px;color:#333;">c</div>

<!-- FEATURE PANEL -->
<div class="abs" style="left:584px;top:36px;width:1px;height:682px;background:#d9d9d9;"></div>
<svg class="abs" style="left:389.5px;top:51px;" width="16" height="16" viewBox="0 0 16 16"><path d="M1 1.2h14l-5.6 6.8v6.6l-2.8-2v-4.6z" fill="none" stroke="#333" stroke-width="1.3" stroke-linejoin="round"/></svg>
<div class="abs" style="left:418px;top:43px;width:159px;height:30px;border:1px solid #bdbdbd;border-radius:4px;background:#fff;"></div>
<div class="t" style="top:51.2px;font-size:13.5px;left:424.6px;color:#8a8a8a;letter-spacing:-0.38px;font-style:italic;">Filter by name or type</div>
<div class="t" style="top:81.0px;font-size:13.5px;left:383.5px;color:#222;font-weight:bold;letter-spacing:-0.3px;">Features (28)</div>
<svg class="abs" style="left:485px;top:81px;" width="20" height="16" viewBox="0 0 20 16"><path d="M1.2 12.5v-10.7h5.6l1.6 2.2h10.4v10.8h-11" fill="none" stroke="#333" stroke-width="1.2"/><path d="M1 13.6h1.6" stroke="#333" stroke-width="1.2"/><path d="M5.8 6v8M1.8 10h8" stroke="#1a50b0" stroke-width="1.7"/></svg>
<div class="abs" style="left:518px;top:82px;width:4.4px;height:14px;background:#222;"></div>
<div class="abs" style="left:526.2px;top:82px;width:4.4px;height:14px;background:#222;"></div>
<svg class="abs" style="left:546px;top:79.5px;" width="18" height="19" viewBox="0 0 18 19"><circle cx="8.6" cy="10.8" r="7" fill="none" stroke="#222" stroke-width="1.7"/><path d="M6.4 1.2h4.4M8.6 1.2v2.6M14.2 3.6l1.4 1.4" stroke="#222" stroke-width="1.5"/><path d="M8.6 10.8l3.4 3.2" stroke="#222" stroke-width="1.2"/></svg>
<svg class="abs" style="left:385.5px;top:114px;" width="9.5" height="6" viewBox="0 0 9.5 6"><path d="M0.8 0.8L4.75 5.2L8.7 0.8" fill="none" stroke="#222" stroke-width="1.7"/></svg>
<div class="t" style="top:109.0px;font-size:13.5px;left:402.6px;color:#222;letter-spacing:-0.1px;">Default geometry</div>
<div class="abs" style="left:388.5px;top:128px;width:1px;height:104px;background:#d0d0d0;"></div>
<div class="abs" style="left:388.5px;top:231.5px;width:5px;height:1px;background:#d0d0d0;"></div>
<div class="abs" style="left:564px;top:104px;width:15px;height:376px;background:#f6f6f6;"></div>
<svg class="abs" style="left:566px;top:108.4px;" width="11" height="7.2" viewBox="0 0 11 7.2"><path d="M5.5 0L11 6Q11 7.2 10 7.2H1Q0 7.2 0 6Z" fill="#8a8a8a"/></svg>
<div class="abs" style="left:567px;top:121.5px;width:9px;height:164px;background:#8a8a8a;border-radius:4.5px;"></div>
<svg class="abs" style="left:566.5px;top:468.4px;" width="10" height="7.4" viewBox="0 0 10 7.4"><path d="M0 0h10l-5 7.4z" fill="#8a8a8a"/></svg>
<svg class="abs" style="left:407px;top:137px;" width="9" height="9" viewBox="0 0 9 9"><circle cx="4.5" cy="4.5" r="3.6" fill="#fff" stroke="#444" stroke-width="1"/><circle cx="4.5" cy="4.5" r="1.5" fill="#333"/></svg>
<div class="t" style="top:134.6px;font-size:13.5px;left:424.3px;color:#222;letter-spacing:-0.2px;">Origin</div>
<svg class="abs" style="left:404px;top:159.6px;" width="16" height="15.5" viewBox="0 0 16 15.5"><path d="M0.6 0.8 L15.2 2.6 L15.2 14.8 L0.6 12.6Z" fill="#e6e6e6" stroke="#a8a8a8" stroke-width="1"/><path d="M7.4 1.8 L7.4 8 L15 9.2" fill="none" stroke="#a8a8a8" stroke-width="1"/></svg>
<div class="t" style="top:161.0px;font-size:13.5px;left:424.3px;color:#a6a6a6;letter-spacing:-0.1px;">Top</div>
<svg class="abs" style="left:404px;top:185.6px;" width="16" height="15.5" viewBox="0 0 16 15.5"><path d="M0.6 0.8 L15.2 2.6 L15.2 14.8 L0.6 12.6Z" fill="#e6e6e6" stroke="#a8a8a8" stroke-width="1"/><path d="M7.4 1.8 L7.4 8 L15 9.2" fill="none" stroke="#a8a8a8" stroke-width="1"/></svg>
<div class="t" style="top:187.0px;font-size:13.5px;left:424.3px;color:#a6a6a6;letter-spacing:-0.1px;">Front</div>
<svg class="abs" style="left:404px;top:211.6px;" width="16" height="15.5" viewBox="0 0 16 15.5"><path d="M0.6 0.8 L15.2 2.6 L15.2 14.8 L0.6 12.6Z" fill="#e6e6e6" stroke="#a8a8a8" stroke-width="1"/><path d="M7.4 1.8 L7.4 8 L15 9.2" fill="none" stroke="#a8a8a8" stroke-width="1"/></svg>
<div class="t" style="top:213.0px;font-size:13.5px;left:424.3px;color:#a6a6a6;letter-spacing:-0.1px;">Right</div>
<div class="abs" style="left:379px;top:232px;width:185px;height:247.5px;overflow:hidden"><svg class="abs" style="left:6px;top:5.4px;" width="17" height="16" viewBox="0 0 17 16"><path d="M6 3.4 L8.6 1 L13.8 1 L16 3.2 L16 12.4 L13.2 15 L3.6 15 L1 12.8 L1 8.6 L6.4 8.6" fill="#fff" stroke="#333" stroke-width="1"/><path d="M1 8.6 L4 10.6 L13 10.6 L13 4.6 L16 3.2 M13 10.6 L13 15" fill="none" stroke="#333" stroke-width="0.8"/><path d="M2 1.6 L7 6.2 M7.4 2.6 L7.2 6.4 L3.2 6.4" fill="none" stroke="#333" stroke-width="1.2"/></svg>
<div class="t" style="top:6.6px;font-size:13.5px;left:26.6px;color:#222;letter-spacing:-0.3px;">Derived 1</div>
<svg class="abs" style="left:6px;top:32px;" width="18" height="16" viewBox="0 0 18 16"><path d="M3.2 12.6 L4.6 9 L12 1.2 L14.6 3.6 L7 11.4 Z M4.6 9 L7 11.4" fill="#fff" stroke="#a8a8a8" stroke-width="1.1" stroke-linejoin="round"/><path d="M0.5 14.2h16" stroke="#8fb4ea" stroke-width="1"/></svg>
<svg class="abs" style="left:13.4px;top:38.6px;" width="12.6" height="12.6" viewBox="0 0 12.6 12.6"><circle cx="6.3" cy="6.3" r="6.3" fill="#1a50b0"/><rect x="2.6" y="5.2" width="7.4" height="2.2" fill="#fff"/></svg>
<div class="t" style="top:32.6px;font-size:13.5px;left:26.6px;color:#a6a6a6;letter-spacing:-0.4px;">Sketch 1</div>
<svg class="abs" style="left:6px;top:57.6px;" width="17" height="16" viewBox="0 0 17 16"><path d="M2.6 0.8 H13.4 Q15.6 0.8 15.6 3 V15.2 H4 L0.8 13 V2.8 Q0.8 0.8 2.6 0.8Z" fill="#fff" stroke="#333" stroke-width="1"/><path d="M0.9 2.6 L3.6 4.2 V15 M3.6 4.2 H15.4" fill="none" stroke="#666" stroke-width="0.7"/><path d="M5.4 6.4 H13.8 L15.4 8 H7Z" fill="#cdcdcd" stroke="#666" stroke-width="0.4"/><path d="M5.4 6.4 L7 8 V15 L5.4 13.6Z" fill="#7a7a7a" stroke="#666" stroke-width="0.4"/><rect x="7" y="8" width="8.4" height="7" fill="#9c9c9c" stroke="#666" stroke-width="0.4"/></svg>
<div class="t" style="top:58.6px;font-size:13.5px;left:26.6px;color:#222;letter-spacing:-0.3px;">Extrude 1</div>
<svg class="abs" style="left:6px;top:84px;" width="18" height="16" viewBox="0 0 18 16"><path d="M3.2 12.6 L4.6 9 L12 1.2 L14.6 3.6 L7 11.4 Z M4.6 9 L7 11.4" fill="#fff" stroke="#a8a8a8" stroke-width="1.1" stroke-linejoin="round"/><path d="M0.5 14.2h16" stroke="#8fb4ea" stroke-width="1"/></svg>
<div class="t" style="top:84.6px;font-size:13.5px;left:26.6px;color:#a6a6a6;letter-spacing:-0.4px;">Sketch 2</div>
<svg class="abs" style="left:6px;top:110px;" width="18" height="16" viewBox="0 0 18 16"><path d="M3.2 12.6 L4.6 9 L12 1.2 L14.6 3.6 L7 11.4 Z M4.6 9 L7 11.4" fill="#fff" stroke="#a8a8a8" stroke-width="1.1" stroke-linejoin="round"/><path d="M0.5 14.2h16" stroke="#8fb4ea" stroke-width="1"/></svg>
<svg class="abs" style="left:13.4px;top:116.6px;" width="12.6" height="12.6" viewBox="0 0 12.6 12.6"><circle cx="6.3" cy="6.3" r="6.3" fill="#1a50b0"/><rect x="2.6" y="5.2" width="7.4" height="2.2" fill="#fff"/></svg>
<div class="t" style="top:110.6px;font-size:13.5px;left:26.6px;color:#a6a6a6;letter-spacing:-0.4px;">Sketch 3</div>
<svg class="abs" style="left:6px;top:135.6px;" width="17" height="16" viewBox="0 0 17 16"><path d="M2.6 0.8 H13.4 Q15.6 0.8 15.6 3 V15.2 H4 L0.8 13 V2.8 Q0.8 0.8 2.6 0.8Z" fill="#fff" stroke="#333" stroke-width="1"/><path d="M0.9 2.6 L3.6 4.2 V15 M3.6 4.2 H15.4" fill="none" stroke="#666" stroke-width="0.7"/><path d="M5.4 6.4 H13.8 L15.4 8 H7Z" fill="#cdcdcd" stroke="#666" stroke-width="0.4"/><path d="M5.4 6.4 L7 8 V15 L5.4 13.6Z" fill="#7a7a7a" stroke="#666" stroke-width="0.4"/><rect x="7" y="8" width="8.4" height="7" fill="#9c9c9c" stroke="#666" stroke-width="0.4"/></svg>
<div class="t" style="top:136.6px;font-size:13.5px;left:26.6px;color:#222;letter-spacing:-0.3px;">Extrude 2</div>
<svg class="abs" style="left:6px;top:162px;" width="18" height="16" viewBox="0 0 18 16"><path d="M3.2 12.6 L4.6 9 L12 1.2 L14.6 3.6 L7 11.4 Z M4.6 9 L7 11.4" fill="#fff" stroke="#a8a8a8" stroke-width="1.1" stroke-linejoin="round"/><path d="M0.5 14.2h16" stroke="#8fb4ea" stroke-width="1"/></svg>
<svg class="abs" style="left:13.4px;top:168.6px;" width="12.6" height="12.6" viewBox="0 0 12.6 12.6"><circle cx="6.3" cy="6.3" r="6.3" fill="#1a50b0"/><rect x="2.6" y="5.2" width="7.4" height="2.2" fill="#fff"/></svg>
<div class="t" style="top:162.6px;font-size:13.5px;left:26.6px;color:#a6a6a6;letter-spacing:-0.4px;">Sketch 4</div>
<svg class="abs" style="left:6px;top:187.6px;" width="17" height="16" viewBox="0 0 17 16"><path d="M2.6 0.8 H13.4 Q15.6 0.8 15.6 3 V15.2 H4 L0.8 13 V2.8 Q0.8 0.8 2.6 0.8Z" fill="#fff" stroke="#333" stroke-width="1"/><path d="M0.9 2.6 L3.6 4.2 V15 M3.6 4.2 H15.4" fill="none" stroke="#666" stroke-width="0.7"/><path d="M5.4 6.4 H13.8 L15.4 8 H7Z" fill="#cdcdcd" stroke="#666" stroke-width="0.4"/><path d="M5.4 6.4 L7 8 V15 L5.4 13.6Z" fill="#7a7a7a" stroke="#666" stroke-width="0.4"/><rect x="7" y="8" width="8.4" height="7" fill="#9c9c9c" stroke="#666" stroke-width="0.4"/></svg>
<div class="t" style="top:188.6px;font-size:13.5px;left:26.6px;color:#222;letter-spacing:-0.3px;">Extrude 3</div>
<svg class="abs" style="left:6px;top:214px;" width="18" height="16" viewBox="0 0 18 16"><path d="M3.2 12.6 L4.6 9 L12 1.2 L14.6 3.6 L7 11.4 Z M4.6 9 L7 11.4" fill="#fff" stroke="#a8a8a8" stroke-width="1.1" stroke-linejoin="round"/><path d="M0.5 14.2h16" stroke="#8fb4ea" stroke-width="1"/></svg>
<svg class="abs" style="left:13.4px;top:220.6px;" width="12.6" height="12.6" viewBox="0 0 12.6 12.6"><circle cx="6.3" cy="6.3" r="6.3" fill="#1a50b0"/><rect x="2.6" y="5.2" width="7.4" height="2.2" fill="#fff"/></svg>
<div class="t" style="top:214.6px;font-size:13.5px;left:26.6px;color:#a6a6a6;letter-spacing:-0.4px;">Sketch 5</div>
<svg class="abs" style="left:6px;top:239.6px;" width="17" height="16" viewBox="0 0 17 16"><path d="M2.6 0.8 H13.4 Q15.6 0.8 15.6 3 V15.2 H4 L0.8 13 V2.8 Q0.8 0.8 2.6 0.8Z" fill="#fff" stroke="#333" stroke-width="1"/><path d="M0.9 2.6 L3.6 4.2 V15 M3.6 4.2 H15.4" fill="none" stroke="#666" stroke-width="0.7"/><path d="M5.4 6.4 H13.8 L15.4 8 H7Z" fill="#cdcdcd" stroke="#666" stroke-width="0.4"/><path d="M5.4 6.4 L7 8 V15 L5.4 13.6Z" fill="#7a7a7a" stroke="#666" stroke-width="0.4"/><rect x="7" y="8" width="8.4" height="7" fill="#9c9c9c" stroke="#666" stroke-width="0.4"/></svg>
<div class="t" style="top:240.6px;font-size:13.5px;left:26.6px;color:#222;letter-spacing:-0.3px;">Extrude 4</div>
</div>
<div class="abs" style="left:379px;top:480px;width:200px;height:1px;background:#d9d9d9;"></div>
<svg class="abs" style="left:384px;top:490.5px;" width="10.5" height="6.5" viewBox="0 0 10.5 6.5"><path d="M0.8 0.8L5.25 5.7L9.7 0.8" fill="none" stroke="#222" stroke-width="1.7"/></svg>
<div class="t" style="top:486.8px;font-size:13.5px;left:402.6px;color:#222;letter-spacing:-0.4px;">Parts (1)</div>
<svg class="abs" style="left:403.5px;top:511.4px;" width="16" height="16" viewBox="0 0 16 16"><path d="M7.4 0.6 H11.2 L15.2 3.8 V15.4 H4.2 L0.7 12.6 V8.2 L3.4 6.9 H7.4Z" fill="#fff" stroke="#333" stroke-width="1.1" stroke-linejoin="round"/><path d="M7.6 0.8 L10.4 3.6 V10.6 H4 L0.9 8.2 M4 10.6 V15.2" fill="none" stroke="#777" stroke-width="0.8"/></svg>
<div class="t" style="top:513.4px;font-size:13.5px;left:424.3px;color:#222;letter-spacing:-0.35px;">Part 1</div>

<!-- COMMENTS PANEL -->
<div class="abs" style="left:26px;top:0px;width:559px;height:36px;border-bottom:1px solid #d6d6d6;"></div>
<div class="abs" style="left:378px;top:0px;width:1px;height:718px;background:#d6d6d6;"></div>
<div class="t" style="top:11.2px;font-size:14.5px;left:31.5px;color:#1d1d1d;font-weight:bold;letter-spacing:-0.36px;">Comments</div>
<svg class="abs" style="left:282px;top:8px;" width="22" height="20" viewBox="0 0 22 20"><ellipse cx="10.5" cy="8" rx="9.5" ry="6.6" fill="#666"/><path d="M6 12 L1.5 18.5 L11 13.5Z" fill="#666"/><circle cx="16" cy="4.8" r="4.6" fill="#fff"/><path d="M16 1.2v7.2M12.4 4.8h7.2" stroke="#1a50b0" stroke-width="1.7"/></svg>
<div class="abs" style="left:314px;top:2px;width:31px;height:30px;background:#ebebeb;border-radius:4px;"></div>
<svg class="abs" style="left:320px;top:8px;" width="18" height="20" viewBox="0 0 18 20"><path d="M9 0.8c-0.9 0-1.5 0.6-1.5 1.4C4.6 3 3.4 5.6 3.4 8.6c0 3.4-0.8 5-2.6 6.6v0.9h16.4v-0.9c-1.8-1.6-2.6-3.2-2.6-6.6 0-3-1.2-5.6-4.1-6.4C10.5 1.4 9.9 0.8 9 0.8z" fill="#1a50b0"/><path d="M6.8 17.2a2.2 2.2 0 0 0 4.4 0z" fill="#1a50b0"/></svg>
<svg class="abs" style="left:358px;top:12px;" width="12" height="12" viewBox="0 0 12 12"><path d="M1 1l10 10M11 1L1 11" stroke="#666" stroke-width="1.4" fill="none"/></svg>
<div class="abs" style="left:37px;top:46px;width:50px;height:34px;border:1px solid #bdbdbd;border-radius:4px;background:#fff;"></div>
<div class="abs" style="left:100px;top:46px;width:71px;height:34px;border:1px solid #bdbdbd;border-radius:4px;background:#fff;"></div>
<svg class="abs" style="left:49px;top:52px;" width="13" height="17" viewBox="0 0 13 17"><circle cx="6.5" cy="6.4" r="5" fill="none" stroke="#222" stroke-width="1.7"/><path d="M6.5 11.4v4.9" stroke="#222" stroke-width="1.8"/></svg>
<svg class="abs" style="left:69px;top:59px;" width="9" height="5" viewBox="0 0 9 5"><path d="M0 0h8l-4 4.4z" fill="#222"/></svg>
<svg class="abs" style="left:112px;top:52px;" width="17" height="17" viewBox="0 0 17 17"><path d="M1 1.5h15l-6 7v7l-3-2.2v-4.8z" fill="none" stroke="#333" stroke-width="1.3" stroke-linejoin="round"/></svg>
<div class="t" style="top:54.1px;font-size:14px;left:133.5px;color:#333;">All</div>
<svg class="abs" style="left:154.5px;top:59px;" width="9" height="5" viewBox="0 0 9 5"><path d="M0 0h8l-4 4.4z" fill="#222"/></svg>
<div class="abs" style="left:26px;top:74px;width:351.5px;height:260.2px;background:#f5f5f5;border:1px solid #86c3f2;"></div>
<svg class="abs" style="left:38px;top:94px;" width="25" height="25" viewBox="0 0 25 25"><defs><clipPath id="av94"><circle cx="12.3" cy="12.4" r="12.3"/></clipPath></defs><circle cx="12.3" cy="12.4" r="12.3" fill="#1a50b0"/><g clip-path="url(#av94)"><circle cx="12.3" cy="10.4" r="6.6" fill="#fff"/><ellipse cx="12.3" cy="27.4" rx="12.2" ry="11.3" fill="#fff"/></g><path d="M21.9 21 A13 13 0 0 1 2.7 21Z" fill="#fff"/></svg>
<div class="t" style="top:95.0px;font-size:12.5px;left:66.0px;color:#222;font-weight:bold;letter-spacing:-0.55px;">Onshape Instructor</div>
<div class="t" style="top:113.9px;font-size:10.5px;left:66.3px;color:#444;letter-spacing:0px;">3:46 PM Today</div>
<div class="abs" style="left:346.5px;top:95.2px;width:15px;height:14.5px;border:1.5px solid #707070;border-radius:3.5px;background:#fff;"></div>
<div class="t" style="top:139.3px;font-size:13.5px;left:38.6px;color:#2b2b2b;letter-spacing:0.21px;">Manufacturing is requesting a .004 tolerance instead</div>
<div class="t" style="top:160.3px;font-size:13.5px;left:38.6px;color:#2b2b2b;letter-spacing:0.21px;">of .005 to avoid additional machining time</div>
<svg class="abs" style="left:41.3px;top:186.3px;" width="15" height="15" viewBox="0 0 15 15"><path d="M0.8 1.6 L0.8 6.6 L8.2 14 Q9 14.6 9.8 14 L14 9.8 Q14.6 9 14 8.2 L6.6 0.8 L1.6 0.8 Q0.8 0.8 0.8 1.6Z" fill="#2e2e2e"/><circle cx="3.6" cy="3.6" r="1.2" fill="#f4f4f4"/></svg>
<div class="t" style="top:185.1px;font-size:13.5px;left:61.6px;color:#1b5a9c;letter-spacing:0.16px;">Dimension on Part 1</div>
<svg class="abs" style="left:324.8px;top:223.1px;" width="8.2" height="12.299999999999999" viewBox="0 0 10 15"><circle cx="5" cy="4.6" r="3.6" fill="none" stroke="#333" stroke-width="1.5"/><path d="M5 8.2v6" stroke="#333" stroke-width="1.5"/></svg>
<div class="t" style="top:222.5px;font-size:13.5px;left:337.0px;color:#333;letter-spacing:0px;">Main</div>
<div class="abs" style="left:48.8px;top:252.2px;width:317.6px;height:34.6px;background:#fff;border:1px solid #c9c9c9;"></div>
<div class="t" style="top:262.0px;font-size:13.5px;left:54.5px;color:#666;letter-spacing:0.3px;">Reply comment</div>
<svg class="abs" style="left:355px;top:277px;" width="9" height="9" viewBox="0 0 9 9"><path d="M1 8.5L8.5 1M5 8.5L8.5 5" stroke="#444" stroke-width="1.1"/></svg>
<div class="abs" style="left:277.5px;top:294.5px;width:28px;height:27px;background:#fff;border:1px solid #b5b5b5;border-radius:4px;"></div>
<div class="abs" style="left:308.5px;top:294.5px;width:28px;height:27px;background:#fff;border:1px solid #b5b5b5;border-radius:4px;"></div>
<div class="abs" style="left:339.5px;top:294.5px;width:28px;height:27px;background:#fff;border:1px solid #b5b5b5;border-radius:4px;"></div>
<svg class="abs" style="left:283.5px;top:300px;" width="16" height="16" viewBox="0 0 15 15"><path d="M0.8 1.6 L0.8 6.6 L8.2 14 Q9 14.6 9.8 14 L14 9.8 Q14.6 9 14 8.2 L6.6 0.8 L1.6 0.8 Q0.8 0.8 0.8 1.6Z" fill="#2e2e2e"/><circle cx="3.6" cy="3.6" r="1.2" fill="#fff"/></svg>
<svg class="abs" style="left:313.5px;top:299.5px;" width="18" height="18" viewBox="0 0 18 18"><rect x="1" y="1" width="13" height="13" fill="none" stroke="#333" stroke-width="1.2" stroke-dasharray="2 1.6"/><path d="M3.5 12.5 L12 3.5 L13.5 5 L5 13.8Z" fill="#fff" stroke="#444" stroke-width="0.9"/><path d="M15 12.5v5M12.5 15h5" stroke="#333" stroke-width="1.1"/></svg>
<svg class="abs" style="left:344.5px;top:300px;" width="18" height="16" viewBox="0 0 18 16"><rect x="0.8" y="0.8" width="16.4" height="14.4" rx="1.5" fill="none" stroke="#2e2e2e" stroke-width="1.5"/><path d="M3 12.5 L7 6.5 L9.8 10 L11.5 8.2 L15 12.5Z" fill="#2e2e2e"/><circle cx="13" cy="4.6" r="1.3" fill="#2e2e2e"/></svg>
<svg class="abs" style="left:38px;top:352.6px;" width="25" height="25" viewBox="0 0 25 25"><defs><clipPath id="av352"><circle cx="12.3" cy="12.4" r="12.3"/></clipPath></defs><circle cx="12.3" cy="12.4" r="12.3" fill="#1a50b0"/><g clip-path="url(#av352)"><circle cx="12.3" cy="10.4" r="6.6" fill="#fff"/><ellipse cx="12.3" cy="27.4" rx="12.2" ry="11.3" fill="#fff"/></g><path d="M21.9 21 A13 13 0 0 1 2.7 21Z" fill="#fff"/></svg>
<div class="t" style="top:353.6px;font-size:12.5px;left:66.0px;color:#222;font-weight:bold;letter-spacing:-0.55px;">Onshape Instructor</div>
<div class="t" style="top:372.5px;font-size:10.5px;left:66.3px;color:#444;letter-spacing:0px;">3:38 PM Today</div>
<div class="abs" style="left:346.5px;top:353.8px;width:15px;height:14.5px;border:1.5px solid #707070;border-radius:3.5px;background:#fff;"></div>
<div class="t" style="top:397.9px;font-size:13.5px;left:38.6px;color:#2b2b2b;letter-spacing:0.21px;">This callout may confuse inspection.</div>
<svg class="abs" style="left:41.3px;top:423.90000000000003px;" width="15" height="15" viewBox="0 0 15 15"><path d="M0.8 1.6 L0.8 6.6 L8.2 14 Q9 14.6 9.8 14 L14 9.8 Q14.6 9 14 8.2 L6.6 0.8 L1.6 0.8 Q0.8 0.8 0.8 1.6Z" fill="#2e2e2e"/><circle cx="3.6" cy="3.6" r="1.2" fill="#f4f4f4"/></svg>
<div class="t" style="top:422.7px;font-size:13.5px;left:61.6px;color:#1b5a9c;letter-spacing:0.16px;">Geometric tolerance on Part 1</div>
<div class="t" style="top:460.1px;font-size:13.5px;left:38.6px;color:#1b5a9c;letter-spacing:0.1px;">Reply</div>
<svg class="abs" style="left:324.8px;top:460.7px;" width="8.2" height="12.299999999999999" viewBox="0 0 10 15"><circle cx="5" cy="4.6" r="3.6" fill="none" stroke="#333" stroke-width="1.5"/><path d="M5 8.2v6" stroke="#333" stroke-width="1.5"/></svg>
<div class="t" style="top:460.1px;font-size:13.5px;left:337.0px;color:#333;letter-spacing:0px;">Main</div>
<div class="abs" style="left:26px;top:488px;width:352px;height:1px;background:#dcdcdc;"></div>
<svg class="abs" style="left:38px;top:506.2px;" width="25" height="25" viewBox="0 0 25 25"><defs><clipPath id="av506"><circle cx="12.3" cy="12.4" r="12.3"/></clipPath></defs><circle cx="12.3" cy="12.4" r="12.3" fill="#1a50b0"/><g clip-path="url(#av506)"><circle cx="12.3" cy="10.4" r="6.6" fill="#fff"/><ellipse cx="12.3" cy="27.4" rx="12.2" ry="11.3" fill="#fff"/></g><path d="M21.9 21 A13 13 0 0 1 2.7 21Z" fill="#fff"/></svg>
<div class="t" style="top:507.2px;font-size:12.5px;left:66.0px;color:#222;font-weight:bold;letter-spacing:-0.55px;">Onshape Instructor</div>
<div class="t" style="top:526.1px;font-size:10.5px;left:66.3px;color:#444;letter-spacing:0px;">3:37 PM Today</div>
<div class="abs" style="left:346.5px;top:507.4px;width:15px;height:14.5px;border:1.5px solid #707070;border-radius:3.5px;background:#fff;"></div>
<div class="t" style="top:551.5px;font-size:13.5px;left:38.6px;color:#2b2b2b;letter-spacing:0.21px;">The current Datum B doesn't match the simulation's</div>
<div class="t" style="top:572.5px;font-size:13.5px;left:38.6px;color:#2b2b2b;letter-spacing:0.21px;">constraint surface. Should we update it for</div>
<div class="t" style="top:593.5px;font-size:13.5px;left:38.6px;color:#2b2b2b;letter-spacing:0.21px;">consistency?</div>
<svg class="abs" style="left:41.3px;top:619.4999999999999px;" width="15" height="15" viewBox="0 0 15 15"><path d="M0.8 1.6 L0.8 6.6 L8.2 14 Q9 14.6 9.8 14 L14 9.8 Q14.6 9 14 8.2 L6.6 0.8 L1.6 0.8 Q0.8 0.8 0.8 1.6Z" fill="#2e2e2e"/><circle cx="3.6" cy="3.6" r="1.2" fill="#f4f4f4"/></svg>
<div class="t" style="top:618.3px;font-size:13.5px;left:61.6px;color:#1b5a9c;letter-spacing:0.16px;">Datum on Part 1</div>
<div class="t" style="top:655.7px;font-size:13.5px;left:38.6px;color:#1b5a9c;letter-spacing:0.1px;">Reply</div>
<svg class="abs" style="left:324.8px;top:656.3px;" width="8.2" height="12.299999999999999" viewBox="0 0 10 15"><circle cx="5" cy="4.6" r="3.6" fill="none" stroke="#333" stroke-width="1.5"/><path d="M5 8.2v6" stroke="#333" stroke-width="1.5"/></svg>
<div class="t" style="top:655.7px;font-size:13.5px;left:337.0px;color:#333;letter-spacing:0px;">Main</div>

<!-- RIGHT PANEL -->
<div class="abs" style="left:1085.5px;top:36px;width:436px;height:682px;background:#fff;border-left:1px solid #d0d0d0;border-top:1px solid #d0d0d0;"></div>
<div class="t" style="top:46.8px;font-size:12.5px;left:1255.0px;color:#1a50b0;font-weight:bold;letter-spacing:0px;">Model definitions</div>
<div class="abs" style="left:1090.5px;top:64px;width:431px;height:2px;background:#1a50b0;"></div>
<div class="t" style="top:82.6px;font-size:13.5px;left:1105.3px;color:#222;letter-spacing:0.15px;">Model</div>
<div class="t" style="top:82.6px;font-size:13.5px;left:1165.3px;color:#222;letter-spacing:-0.05px;">Part 1</div>
<div class="abs" style="left:1153px;top:102px;width:220px;height:1px;background:#9a9a9a;"></div>
<svg class="abs" style="left:1359px;top:85.3px;" width="8.4" height="6.2" viewBox="0 0 8.4 6.2"><path d="M0 0h8.4l-4.2 6.2z" fill="#777"/></svg>
<div class="abs" style="left:1094px;top:108px;width:189.5px;height:26px;border:1px solid #dcdcdc;border-radius:3px;background:#fff;"></div>
<svg class="abs" style="left:1097px;top:110px;" width="21" height="22" viewBox="0 0 21 22"><rect x="0.6" y="0.6" width="10.4" height="8" fill="#222"/><path d="M0.6 3.3h10.4M0.6 5.9h10.4M4.1 0.6v8M7.5 0.6v8" stroke="#ddd" stroke-width="0.7"/><path d="M13.4 2.8 L17.6 6.6" fill="none" stroke="#222" stroke-width="1.2"/><path d="M2.8 13.6 L6.8 17.6" fill="none" stroke="#222" stroke-width="1.2"/><path d="M8.6 16 L15.6 8.8" stroke="#222" stroke-width="1.8"/><path d="M6.6 18 L7.6 13.2 L11.4 17Z M17.6 6.8 L16.6 11.6 L12.8 7.8Z" fill="#222"/><path d="M15 15.6h5.4M17.7 13v5M15 20.4h5.4" stroke="#222" stroke-width="1.1"/></svg>
<div class="t" style="top:113.9px;font-size:13.5px;left:1121.4px;color:#222;letter-spacing:0.06px;">Precision (.xxx default)</div>
<div class="t" style="top:113.9px;font-size:13.5px;left:1267.2px;color:#333;">x</div>
<div class="abs" style="left:1481.4px;top:121px;width:3.6px;height:3.6px;background:#222;border-radius:50%;"></div>
<div class="abs" style="left:1488.6000000000001px;top:121px;width:3.6px;height:3.6px;background:#222;border-radius:50%;"></div>
<div class="abs" style="left:1495.8px;top:121px;width:3.6px;height:3.6px;background:#222;border-radius:50%;"></div>
<div class="abs" style="left:1090.5px;top:141.5px;width:428.5px;height:44.5px;background:#f5f5f5;border-bottom:1px solid #e2e2e2;"></div>
<svg class="abs" style="left:1100.5px;top:157px;" width="17" height="21" viewBox="0 0 17 21"><rect x="0.8" y="0.8" width="15.4" height="14.4" fill="#fff" stroke="#222" stroke-width="1.3"/><path d="M8.5 15v3" stroke="#222" stroke-width="1.2"/><path d="M4.6 20.6h7.8l-3.9-3.4z" fill="#222"/></svg>
<div class="t" style="top:160.1px;font-size:12px;left:1109.0px;transform:translateX(-50%);color:#222;font-weight:bold;">A</div>
<svg class="abs" style="left:1134px;top:159px;" width="17" height="17" viewBox="0 0 17 17"><path d="M3 13.6 L13 3.6" stroke="#222" stroke-width="1.5"/><path d="M1.6 15 L2.8 10.4 L6.2 13.8Z M14.4 2.2 L13.2 6.8 L9.8 3.4Z" fill="#222"/><path d="M0.6 11.4 L4.6 15.6 M11.4 0.6 L15.8 5" stroke="#222" stroke-width="1"/></svg>
<svg class="abs" style="left:1161px;top:162.2px;" width="10.5" height="6.5" viewBox="0 0 10.5 6.5"><path d="M0.8 0.8L5.25 5.4L9.7 0.8" fill="none" stroke="#222" stroke-width="1.6"/></svg>
<svg class="abs" style="left:1182px;top:158.5px;" width="21.5" height="16.5" viewBox="0 0 21.5 16.5"><rect x="0.8" y="0.8" width="19.8" height="14.6" fill="#fff" stroke="#222" stroke-width="1.3"/><path d="M14.2 0.8v14.6" stroke="#222" stroke-width="1.2"/><circle cx="7.4" cy="8.1" r="3.4" fill="none" stroke="#222" stroke-width="1.1"/><path d="M2.4 8.1h10M7.4 3.2v9.8" stroke="#222" stroke-width="1"/><path d="M17.4 3.4v9.6" stroke="#222" stroke-width="1.2" stroke-dasharray="1.6 1.6"/></svg>
<svg class="abs" style="left:1219.5px;top:160.5px;" width="19" height="16" viewBox="0 0 19 16"><path d="M0.8 7.6 L4.4 3.6 L7.2 1 M1.2 1.6 L5 5.6 L13 3.6 L16.6 10.6" fill="none" stroke="#222" stroke-width="1.1"/><path d="M7.4 1 L9.8 6.6" stroke="#222" stroke-width="1"/><path d="M15 10.6 L18.4 9.6 L17.4 14.6Z" fill="#222"/></svg>
<div class="abs" style="left:1247.5px;top:153.5px;width:1.2px;height:27px;background:#cfcfcf;"></div>
<svg class="abs" style="left:1257.5px;top:158px;" width="19" height="18" viewBox="0 0 19 18"><path d="M0.8 16 L16.6 0.8" stroke="#3a6fd0" stroke-width="1.2"/><path d="M8.4 8.4 L17.6 17" stroke="#111" stroke-width="2.2"/><circle cx="8.4" cy="8.6" r="2.2" fill="#111"/></svg>
<svg class="abs" style="left:1292px;top:158px;" width="19" height="18" viewBox="0 0 19 18"><path d="M6 0.8 L18.2 12.4" stroke="#3a6fd0" stroke-width="1.2"/><path d="M1 4 L13.6 16.6" stroke="#111" stroke-width="2.2"/></svg>
<svg class="abs" style="left:1329.5px;top:158px;" width="19" height="17" viewBox="0 0 19 17"><path d="M4.4 16 L16.4 4.6" stroke="#111" stroke-width="1.6"/><path d="M18.4 2.4 L17 7.4 L13.4 3.8Z" fill="#111"/><path d="M6.2 11.6 L1.4 1.6 L11.6 6 M3.6 6.4 L7.4 4.2" fill="none" stroke="#111" stroke-width="1.7" stroke-linejoin="round"/></svg>
<div class="abs" style="left:1091px;top:193.5px;width:416px;height:36px;background:#ebebeb;border:1px solid #c4c4c4;"></div>
<svg class="abs" style="left:1098px;top:210px;" width="10.5" height="7" viewBox="0 0 10.5 7"><path d="M0.8 0.8L5.25 5.6L9.7 0.8" fill="none" stroke="#222" stroke-width="1.7"/></svg>
<div class="t" style="top:205.1px;font-size:15px;left:1112.4px;color:#222;font-weight:bold;letter-spacing:0px;">Datums</div>
<div class="t" style="top:206.4px;font-size:13.5px;left:1172.0px;color:#8a8a8a;letter-spacing:0px;">(2/2)</div>
<div class="abs" style="left:1091px;top:228.5px;width:141.5px;height:35.5px;background:#ebebeb;border:1px solid #c4c4c4;"></div>
<div class="abs" style="left:1091px;top:263px;width:141.5px;height:34.5px;background:#ebebeb;border:1px solid #c4c4c4;"></div>
<div class="t" style="top:239.2px;font-size:13px;left:1154.0px;transform:translateX(-50%);color:#222;font-weight:bold;">A</div>
<div class="t" style="top:272.6px;font-size:13px;left:1154.0px;transform:translateX(-50%);color:#222;font-weight:bold;">B</div>
<svg class="abs" style="left:1214.2px;top:275.6px;" width="12" height="10.5" viewBox="0 0 12 10.5"><ellipse cx="6.4" cy="4" rx="5.6" ry="3.9" fill="#1a50b0"/><path d="M3 6 L1 10.2 L6.6 7.4Z" fill="#1a50b0"/></svg>
<div class="abs" style="left:1091px;top:303.5px;width:416px;height:37.5px;background:#ebebeb;border:1px solid #c4c4c4;"></div>
<svg class="abs" style="left:1098px;top:319.5px;" width="10.5" height="7" viewBox="0 0 10.5 7"><path d="M0.8 0.8L5.25 5.6L9.7 0.8" fill="none" stroke="#222" stroke-width="1.7"/></svg>
<div class="t" style="top:314.8px;font-size:15px;left:1111.8px;color:#222;font-weight:bold;letter-spacing:0.13px;">Characteristics</div>
<div class="t" style="top:316.1px;font-size:13.5px;left:1227.0px;color:#8a8a8a;letter-spacing:0px;">(16/16)</div>
<svg class="abs" style="left:1298.5px;top:311.5px;" width="21" height="22" viewBox="0 0 21 22"><rect x="0.6" y="0.6" width="10.4" height="8" fill="#222"/><path d="M0.6 3.3h10.4M0.6 5.9h10.4M4.1 0.6v8M7.5 0.6v8" stroke="#ddd" stroke-width="0.7"/><path d="M13.4 2.8 L17.6 6.6" fill="none" stroke="#222" stroke-width="1.2"/><path d="M2.8 13.6 L6.8 17.6" fill="none" stroke="#222" stroke-width="1.2"/><path d="M8.6 16 L15.6 8.8" stroke="#222" stroke-width="1.8"/><path d="M6.6 18 L7.6 13.2 L11.4 17Z M17.6 6.8 L16.6 11.6 L12.8 7.8Z" fill="#222"/><path d="M15 15.6h5.4M17.7 13v5M15 20.4h5.4" stroke="#222" stroke-width="1.1"/></svg>
<div class="abs" style="left:1333px;top:306px;width:30px;height:30.5px;background:#8ecdf0;border-radius:4px;"></div>
<svg class="abs" style="left:1338.5px;top:312px;" width="19" height="19" viewBox="0 0 19 19"><path d="M9.4 1.2 L14.6 1.2 L18 4.4 L18 17.6 L4.6 17.6 L1 14.4 L1 9.6 L4.4 7.6 L9.4 7.6Z" fill="#fff" stroke="#222" stroke-width="1.2" stroke-linejoin="round"/><path d="M1 9.6 L4.6 12.4 L12.4 12.4 L12.4 4.2 L9.4 1.4 M12.4 12.4 L18 17.4 M4.6 12.4 V17.6 M12.4 4.2 L18 4.4" fill="none" stroke="#222" stroke-width="1"/><path d="M1.4 1 Q8.4 0.4 8 6.6" fill="none" stroke="#222" stroke-width="1.5"/><path d="M4.8 5.4 L8 9.4 L11 5.4Z" fill="#222"/></svg>
<div class="abs" style="left:1091px;top:340px;width:141px;height:34px;background:#ebebeb;border:1px solid #c4c4c4;"></div>
<div class="abs" style="left:1231px;top:340px;width:140.5999999999999px;height:34px;background:#ebebeb;border:1px solid #c4c4c4;"></div>
<div class="abs" style="left:1370.6px;top:340px;width:136.4000000000001px;height:34px;background:#ebebeb;border:1px solid #c4c4c4;"></div>
<div class="t" style="top:350.2px;font-size:13.5px;left:1161.8px;transform:translateX(-50%);color:#222;font-weight:bold;letter-spacing:0.2px;">Type</div>
<div class="t" style="top:350.2px;font-size:13.5px;left:1301.2px;transform:translateX(-50%);color:#222;font-weight:bold;letter-spacing:0.15px;">Nominal value</div>
<div class="t" style="top:350.2px;font-size:13.5px;left:1441.0px;transform:translateX(-50%);color:#222;font-weight:bold;letter-spacing:0.2px;">Tolerance</div>
<div class="abs" style="left:1091px;top:373px;width:141px;height:35px;background:#ebebeb;border:1px solid #c4c4c4;"></div>
<div class="abs" style="left:1231px;top:373px;width:140.5999999999999px;height:35px;background:#f5f5f5;border:1px solid #c4c4c4;"></div>
<div class="abs" style="left:1370.6px;top:373px;width:136.4000000000001px;height:35px;background:#f5f5f5;border:1px solid #c4c4c4;"></div>
<div class="t" style="top:382.9px;font-size:13.4px;left:1154.0px;transform:translateX(-50%);color:#222;font-weight:bold;letter-spacing:0px;">Distance</div>
<div class="t" style="top:381.9px;font-size:13.3px;left:1301.0px;transform:translateX(-50%);color:#2a2a2a;letter-spacing:0.1px;">6.500</div>
<div class="t" style="top:382.8px;font-size:13.5px;left:1441.3px;transform:translateX(-50%);color:#444;letter-spacing:0.1px;">--</div>
<div class="abs" style="left:1091px;top:407px;width:141px;height:35px;background:#ebebeb;border:1px solid #c4c4c4;"></div>
<div class="abs" style="left:1231px;top:407px;width:140.5999999999999px;height:35px;background:#f8fbfe;border:1px solid #c4c4c4;"></div>
<div class="abs" style="left:1370.6px;top:407px;width:136.4000000000001px;height:35px;background:#f8fbfe;border:1px solid #c4c4c4;"></div>
<div class="t" style="top:416.9px;font-size:13.4px;left:1154.0px;transform:translateX(-50%);color:#222;font-weight:bold;letter-spacing:0px;">Distance</div>
<div class="t" style="top:415.9px;font-size:13.3px;left:1301.0px;transform:translateX(-50%);color:#2a2a2a;letter-spacing:0.1px;">1.421</div>
<div class="t" style="top:416.8px;font-size:13.5px;left:1441.3px;transform:translateX(-50%);color:#444;letter-spacing:0.1px;">±0.005</div>
<div class="abs" style="left:1091px;top:441px;width:141px;height:35px;background:#ebebeb;border:1px solid #c4c4c4;"></div>
<div class="abs" style="left:1231px;top:441px;width:140.5999999999999px;height:35px;background:#f5f5f5;border:1px solid #c4c4c4;"></div>
<div class="abs" style="left:1370.6px;top:441px;width:136.4000000000001px;height:35px;background:#f5f5f5;border:1px solid #c4c4c4;"></div>
<div class="t" style="top:450.9px;font-size:13.4px;left:1154.0px;transform:translateX(-50%);color:#222;font-weight:bold;letter-spacing:0px;">Distance</div>
<div class="t" style="top:449.9px;font-size:13.3px;left:1301.0px;transform:translateX(-50%);color:#2a2a2a;letter-spacing:0.1px;">1.000</div>
<div class="t" style="top:450.8px;font-size:13.5px;left:1441.3px;transform:translateX(-50%);color:#444;letter-spacing:0.1px;">±0.005</div>
<div class="abs" style="left:1091px;top:475px;width:141px;height:35px;background:#ebebeb;border:1px solid #c4c4c4;"></div>
<div class="abs" style="left:1231px;top:475px;width:140.5999999999999px;height:35px;background:#f5f5f5;border:1px solid #c4c4c4;"></div>
<div class="abs" style="left:1370.6px;top:475px;width:136.4000000000001px;height:35px;background:#f5f5f5;border:1px solid #c4c4c4;"></div>
<div class="t" style="top:484.9px;font-size:13.4px;left:1154.0px;transform:translateX(-50%);color:#222;font-weight:bold;letter-spacing:0px;">Distance</div>
<div class="t" style="top:483.9px;font-size:13.3px;left:1301.0px;transform:translateX(-50%);color:#2a2a2a;letter-spacing:0.1px;">0.905</div>
<div class="t" style="top:484.8px;font-size:13.5px;left:1441.3px;transform:translateX(-50%);color:#444;letter-spacing:0.1px;">±0.005</div>
<div class="abs" style="left:1091px;top:509px;width:141px;height:35px;background:#ebebeb;border:1px solid #c4c4c4;"></div>
<div class="abs" style="left:1231px;top:509px;width:140.5999999999999px;height:35px;background:#f5f5f5;border:1px solid #c4c4c4;"></div>
<div class="abs" style="left:1370.6px;top:509px;width:136.4000000000001px;height:35px;background:#f5f5f5;border:1px solid #c4c4c4;"></div>
<div class="t" style="top:518.9px;font-size:13.4px;left:1154.0px;transform:translateX(-50%);color:#222;font-weight:bold;letter-spacing:0px;">Distance</div>
<div class="t" style="top:517.9px;font-size:13.3px;left:1301.0px;transform:translateX(-50%);color:#2a2a2a;letter-spacing:0.1px;">1.422</div>
<div class="t" style="top:518.8px;font-size:13.5px;left:1441.3px;transform:translateX(-50%);color:#444;letter-spacing:0.1px;">±0.005</div>
<div class="abs" style="left:1091px;top:543px;width:141px;height:35px;background:#ebebeb;border:1px solid #c4c4c4;"></div>
<div class="abs" style="left:1231px;top:543px;width:140.5999999999999px;height:35px;background:#f5f5f5;border:1px solid #c4c4c4;"></div>
<div class="abs" style="left:1370.6px;top:543px;width:136.4000000000001px;height:35px;background:#f5f5f5;border:1px solid #c4c4c4;"></div>
<div class="t" style="top:552.9px;font-size:13.4px;left:1154.0px;transform:translateX(-50%);color:#222;font-weight:bold;letter-spacing:0px;">Distance</div>
<div class="t" style="top:551.9px;font-size:13.3px;left:1301.0px;transform:translateX(-50%);color:#2a2a2a;letter-spacing:0.1px;">0.905</div>
<div class="t" style="top:552.8px;font-size:13.5px;left:1441.3px;transform:translateX(-50%);color:#444;letter-spacing:0.1px;">±0.005</div>
<div class="abs" style="left:1091px;top:577px;width:141px;height:35px;background:#ebebeb;border:1px solid #c4c4c4;"></div>
<div class="abs" style="left:1231px;top:577px;width:140.5999999999999px;height:35px;background:#f5f5f5;border:1px solid #c4c4c4;"></div>
<div class="abs" style="left:1370.6px;top:577px;width:136.4000000000001px;height:35px;background:#f5f5f5;border:1px solid #c4c4c4;"></div>
<div class="t" style="top:586.9px;font-size:13.4px;left:1154.0px;transform:translateX(-50%);color:#222;font-weight:bold;letter-spacing:0px;">Diameter</div>
<div class="t" style="top:585.9px;font-size:13.3px;left:1301.0px;transform:translateX(-50%);color:#2a2a2a;letter-spacing:0.1px;">0.99830</div>
<div class="t" style="top:586.8px;font-size:13.5px;left:1441.3px;transform:translateX(-50%);color:#444;letter-spacing:0.25px;">+0.00025/-0.00000</div>
<div class="abs" style="left:1091px;top:611px;width:141px;height:35px;background:#ebebeb;border:1px solid #c4c4c4;"></div>
<div class="abs" style="left:1231px;top:611px;width:140.5999999999999px;height:35px;background:#f5f5f5;border:1px solid #c4c4c4;"></div>
<div class="abs" style="left:1370.6px;top:611px;width:136.4000000000001px;height:35px;background:#f5f5f5;border:1px solid #c4c4c4;"></div>
<div class="t" style="top:620.9px;font-size:13.4px;left:1154.0px;transform:translateX(-50%);color:#222;font-weight:bold;letter-spacing:0px;">Distance</div>
<div class="t" style="top:619.9px;font-size:13.3px;left:1301.0px;transform:translateX(-50%);color:#2a2a2a;letter-spacing:0.1px;">1.421</div>
<div class="t" style="top:620.8px;font-size:13.5px;left:1441.3px;transform:translateX(-50%);color:#444;letter-spacing:0.1px;">±0.005</div>
<div class="abs" style="left:1091px;top:645px;width:141px;height:35px;background:#ebebeb;border:1px solid #c4c4c4;"></div>
<div class="abs" style="left:1231px;top:645px;width:140.5999999999999px;height:35px;background:#f5f5f5;border:1px solid #c4c4c4;"></div>
<div class="abs" style="left:1370.6px;top:645px;width:136.4000000000001px;height:35px;background:#f5f5f5;border:1px solid #c4c4c4;"></div>
<div class="t" style="top:654.9px;font-size:13.4px;left:1154.0px;transform:translateX(-50%);color:#222;font-weight:bold;letter-spacing:0px;">Diameter</div>
<div class="t" style="top:653.9px;font-size:13.3px;left:1301.0px;transform:translateX(-50%);color:#2a2a2a;letter-spacing:0.1px;">2.3745</div>
<div class="t" style="top:654.8px;font-size:13.5px;left:1441.3px;transform:translateX(-50%);color:#444;letter-spacing:0.25px;">+0.0000/-0.0005</div>
<div class="abs" style="left:1091px;top:407px;width:416px;height:35px;border:1.3px solid #8fcaf3;"></div>
<svg class="abs" style="left:1214.2px;top:420.6px;" width="12" height="10.5" viewBox="0 0 12 10.5"><ellipse cx="6.4" cy="4" rx="5.6" ry="3.9" fill="#1a50b0"/><path d="M3 6 L1 10.2 L6.6 7.4Z" fill="#1a50b0"/></svg>
<svg class="abs" style="left:1509px;top:198.5px;" width="10.4" height="7.4" viewBox="0 0 10.4 7.4"><path d="M5.2 0L10.4 6.2Q10.4 7.4 9.4 7.4H1Q0 7.4 0 6.2Z" fill="#8a8a8a"/></svg>
<div class="abs" style="left:1510px;top:211.6px;width:8.5px;height:199.6px;background:#8a8a8a;border-radius:4.3px;"></div>
<svg class="abs" style="left:1509.5px;top:667.2px;" width="10" height="7.4" viewBox="0 0 10 7.4"><path d="M0 0h10l-5 7.4z" fill="#8a8a8a"/></svg>
<div class="abs" style="left:1091px;top:679.5px;width:430px;height:38.5px;background:#eeeeee;"></div>
<svg class="abs" style="left:1498.5px;top:693.4px;" width="12.4" height="12.4" viewBox="0 0 12.4 12.4"><circle cx="6.2" cy="6.2" r="6.1" fill="#a0a0a0"/></svg>
<div class="t" style="top:694.7px;font-size:10px;left:1504.7px;transform:translateX(-50%);color:#fff;font-weight:bold;">?</div>

<!-- OVERLAYS -->
<div class="abs" style="left:24px;top:72px;width:361.3px;height:270px;border:8px solid #fe0000;"></div>
<div class="abs" style="left:761px;top:219px;width:56px;height:57px;border:8px solid #fe0000;"></div>
<div class="abs" style="left:1195px;top:396px;width:50px;height:56px;border:8px solid #fe0000;"></div>

</body></html>
